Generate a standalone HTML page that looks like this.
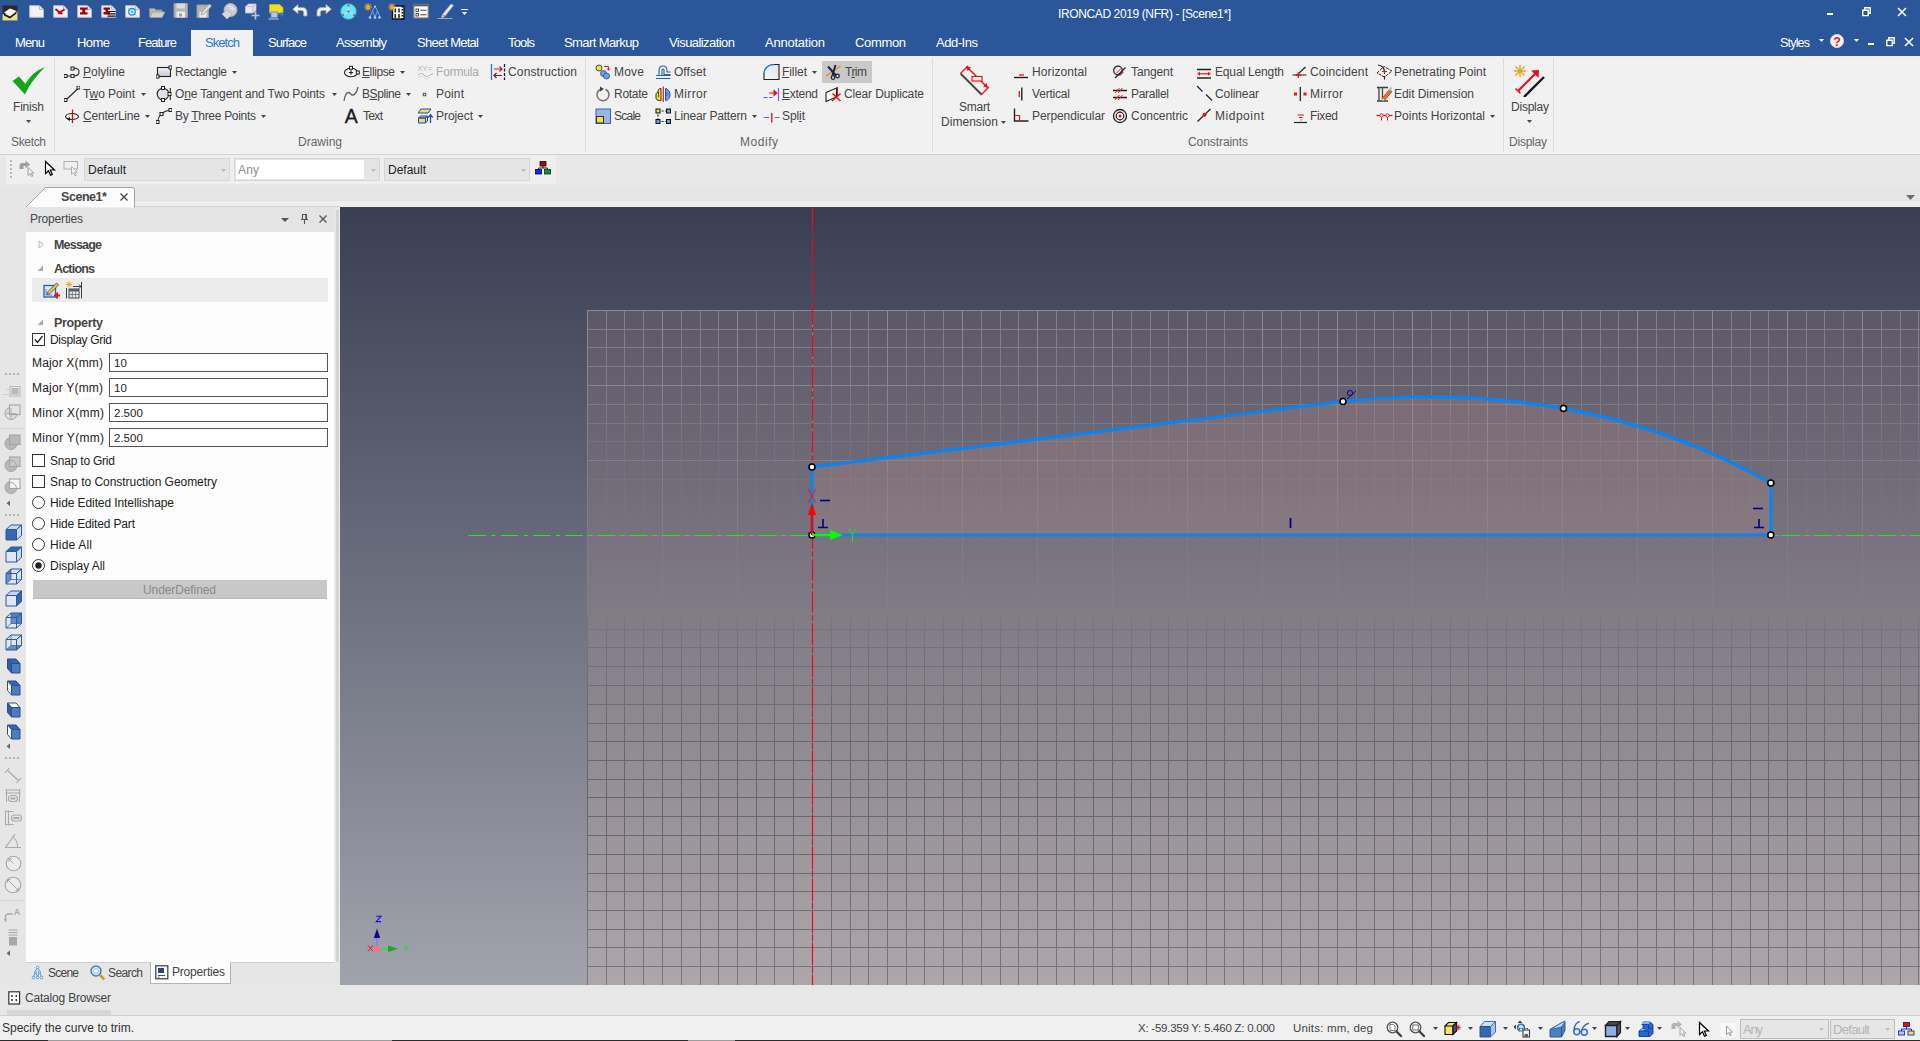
<!DOCTYPE html>
<html><head><meta charset="utf-8"><title>IRONCAD 2019 (NFR) - [Scene1*]</title><style>
html,body{margin:0;padding:0;}
body{width:1920px;height:1041px;overflow:hidden;position:relative;background:#f0f0f0;font-family:"Liberation Sans", sans-serif;}
.a{position:absolute;display:block;}
.t{position:absolute;white-space:pre;font-family:"Liberation Sans", sans-serif;}
</style></head>
<body>
<div class="a" style="left:0px;top:0px;width:1920px;height:56px;background:#2b579a;"></div>
<div class="a" style="left:0px;top:56px;width:1920px;height:98px;background:#f1f1f1;"></div>
<div class="a" style="left:0px;top:154px;width:1920px;height:1px;background:#d2d2d2;"></div>
<div class="a" style="left:0px;top:155px;width:1920px;height:52px;background:#e8e8e8;"></div>
<div class="a" style="left:191px;top:30px;width:62px;height:26px;background:#f1f1f1;"></div>
<div class="a" style="left:6px;top:155px;width:550px;height:29px;background:#efefef;"></div>
<div class="a" style="left:0px;top:186px;width:1920px;height:21px;background:#e6e6e6;"></div>
<div class="a" style="left:135px;top:200px;width:1785px;height:1px;background:#e6e0e0;"></div>
<div class="a" style="left:135px;top:201px;width:1785px;height:6px;background:#eeeeea;"></div>
<div class="a" style="left:135px;top:206px;width:205px;height:1px;background:#d4d4d4;"></div>
<div class="a" style="left:0px;top:207px;width:26px;height:808px;background:#e6e6e6;"></div>
<div class="a" style="left:26px;top:207px;width:309px;height:25px;background:#e4e4e4;"></div>
<div class="a" style="left:26px;top:232px;width:308px;height:730px;background:#fdfdfd;"></div>
<div class="a" style="left:334px;top:207px;width:6px;height:778px;background:#e8e8e8;"></div>
<div class="a" style="left:336px;top:210px;width:3px;height:752px;background:#d4d4d1;"></div>
<div class="a" style="left:339px;top:207px;width:1px;height:778px;background:#eeeeee;"></div>
<div class="a" style="left:26px;top:962px;width:314px;height:23px;background:#e6e6e6;"></div>
<div class="a" style="left:0px;top:985px;width:1920px;height:30px;background:#e8e8e8;"></div>
<div class="a" style="left:0px;top:1016px;width:1920px;height:25px;background:#f0f0f0;"></div>
<div class="a" style="left:0px;top:1015px;width:1920px;height:1px;background:#cfcfcf;"></div>
<svg class="a" style="left:340px;top:207px;" width="1580" height="778" viewBox="0 0 1580 778"><defs>
<linearGradient id="bg" x1="0" y1="0" x2="0" y2="1">
<stop offset="0" stop-color="#3a3e53"/><stop offset="1" stop-color="#a1a3ac"/></linearGradient>
<linearGradient id="pl" x1="0" y1="0" x2="0" y2="1"><stop offset="0" stop-color="#5d5868"/><stop offset="1" stop-color="#ada6ab"/></linearGradient>
<linearGradient id="gminor" gradientUnits="userSpaceOnUse" x1="0" y1="103" x2="0" y2="778"><stop offset="0.0000" stop-color="#838088"/><stop offset="0.0222" stop-color="#828087"/><stop offset="0.0444" stop-color="#827f87"/><stop offset="0.0667" stop-color="#817f86"/><stop offset="0.0741" stop-color="#817f86"/><stop offset="0.0889" stop-color="#807e85"/><stop offset="0.1111" stop-color="#7f7d84"/><stop offset="0.1333" stop-color="#7e7b82"/><stop offset="0.1556" stop-color="#7b7880"/><stop offset="0.1778" stop-color="#78767d"/><stop offset="0.1926" stop-color="#76747b"/><stop offset="0.2000" stop-color="#76747a"/><stop offset="0.2222" stop-color="#76737a"/><stop offset="0.2444" stop-color="#757279"/><stop offset="0.2519" stop-color="#757279"/><stop offset="0.2667" stop-color="#767379"/><stop offset="0.2889" stop-color="#76747a"/><stop offset="0.3111" stop-color="#77757b"/><stop offset="0.3333" stop-color="#78757c"/><stop offset="0.3556" stop-color="#767581"/><stop offset="0.3778" stop-color="#787783"/><stop offset="0.4000" stop-color="#7a7885"/><stop offset="0.4222" stop-color="#7b7a86"/><stop offset="0.4444" stop-color="#7d7c88"/><stop offset="0.4474" stop-color="#7d7c88"/><stop offset="0.4548" stop-color="#767580"/><stop offset="0.4667" stop-color="#75747f"/><stop offset="0.4889" stop-color="#74727e"/><stop offset="0.5037" stop-color="#73717d"/><stop offset="0.5111" stop-color="#72717c"/><stop offset="0.5333" stop-color="#706f7a"/><stop offset="0.5556" stop-color="#6e6d78"/><stop offset="0.5778" stop-color="#6c6b76"/><stop offset="0.6000" stop-color="#6b6a74"/><stop offset="0.6222" stop-color="#6a6973"/><stop offset="0.6444" stop-color="#696772"/><stop offset="0.6667" stop-color="#676670"/><stop offset="0.6889" stop-color="#67656f"/><stop offset="0.7111" stop-color="#66656f"/><stop offset="0.7259" stop-color="#66656e"/><stop offset="0.7333" stop-color="#67656f"/><stop offset="0.7556" stop-color="#686670"/><stop offset="0.7778" stop-color="#696871"/><stop offset="0.8000" stop-color="#6a6972"/><stop offset="0.8222" stop-color="#6c6a73"/><stop offset="0.8444" stop-color="#6d6b74"/><stop offset="0.8667" stop-color="#6e6d75"/><stop offset="0.8741" stop-color="#6f6d75"/><stop offset="0.8889" stop-color="#706e76"/><stop offset="0.9111" stop-color="#716f77"/><stop offset="0.9333" stop-color="#727179"/><stop offset="0.9556" stop-color="#74727a"/><stop offset="0.9778" stop-color="#75737b"/><stop offset="1.0000" stop-color="#77757c"/></linearGradient>
<linearGradient id="gmajor" gradientUnits="userSpaceOnUse" x1="0" y1="103" x2="0" y2="778"><stop offset="0.0000" stop-color="#8d8a92"/><stop offset="0.0222" stop-color="#8c8a91"/><stop offset="0.0444" stop-color="#8c8991"/><stop offset="0.0667" stop-color="#8b8990"/><stop offset="0.0741" stop-color="#8b8990"/><stop offset="0.0889" stop-color="#8a888f"/><stop offset="0.1111" stop-color="#89878e"/><stop offset="0.1333" stop-color="#88858c"/><stop offset="0.1556" stop-color="#86848b"/><stop offset="0.1778" stop-color="#858289"/><stop offset="0.1926" stop-color="#838188"/><stop offset="0.2000" stop-color="#838087"/><stop offset="0.2222" stop-color="#827f86"/><stop offset="0.2444" stop-color="#807e84"/><stop offset="0.2519" stop-color="#807d84"/><stop offset="0.2667" stop-color="#807d84"/><stop offset="0.2889" stop-color="#807d84"/><stop offset="0.3111" stop-color="#807d84"/><stop offset="0.3333" stop-color="#807d83"/><stop offset="0.3556" stop-color="#807d83"/><stop offset="0.3778" stop-color="#807d83"/><stop offset="0.4000" stop-color="#817e83"/><stop offset="0.4222" stop-color="#817e84"/><stop offset="0.4444" stop-color="#817e84"/><stop offset="0.4474" stop-color="#817e84"/><stop offset="0.4548" stop-color="#767580"/><stop offset="0.4667" stop-color="#75747f"/><stop offset="0.4889" stop-color="#74727e"/><stop offset="0.5037" stop-color="#73717d"/><stop offset="0.5111" stop-color="#72717c"/><stop offset="0.5333" stop-color="#706f7a"/><stop offset="0.5556" stop-color="#6e6d78"/><stop offset="0.5778" stop-color="#6c6b76"/><stop offset="0.6000" stop-color="#6b6a74"/><stop offset="0.6222" stop-color="#6a6973"/><stop offset="0.6444" stop-color="#696772"/><stop offset="0.6667" stop-color="#676670"/><stop offset="0.6889" stop-color="#67656f"/><stop offset="0.7111" stop-color="#66656f"/><stop offset="0.7259" stop-color="#66656e"/><stop offset="0.7333" stop-color="#67656f"/><stop offset="0.7556" stop-color="#686670"/><stop offset="0.7778" stop-color="#696871"/><stop offset="0.8000" stop-color="#6a6972"/><stop offset="0.8222" stop-color="#6c6a73"/><stop offset="0.8444" stop-color="#6d6b74"/><stop offset="0.8667" stop-color="#6e6d75"/><stop offset="0.8741" stop-color="#6f6d75"/><stop offset="0.8889" stop-color="#706e76"/><stop offset="0.9111" stop-color="#716f77"/><stop offset="0.9333" stop-color="#727179"/><stop offset="0.9556" stop-color="#74727a"/><stop offset="0.9778" stop-color="#75737b"/><stop offset="1.0000" stop-color="#77757c"/></linearGradient>
</defs><rect x="0" y="0" width="1580" height="778" fill="url(#bg)"/><rect x="247" y="103" width="1333" height="675" fill="url(#pl)"/><path d="M266.5 103V778M284.5 103V778M303.5 103V778M341.5 103V778M360.5 103V778M378.5 103V778M416.5 103V778M434.5 103V778M453.5 103V778M491.5 103V778M510.5 103V778M528.5 103V778M566.5 103V778M584.5 103V778M603.5 103V778M641.5 103V778M660.5 103V778M678.5 103V778M716.5 103V778M734.5 103V778M753.5 103V778M791.5 103V778M810.5 103V778M828.5 103V778M866.5 103V778M884.5 103V778M903.5 103V778M941.5 103V778M960.5 103V778M978.5 103V778M1016.5 103V778M1034.5 103V778M1053.5 103V778M1091.5 103V778M1110.5 103V778M1128.5 103V778M1166.5 103V778M1184.5 103V778M1203.5 103V778M1241.5 103V778M1260.5 103V778M1278.5 103V778M1316.5 103V778M1334.5 103V778M1353.5 103V778M1391.5 103V778M1410.5 103V778M1428.5 103V778M1466.5 103V778M1484.5 103V778M1503.5 103V778M1541.5 103V778M1560.5 103V778M1578.5 103V778M247 122.5H1580M247 140.5H1580M247 159.5H1580M247 197.5H1580M247 216.5H1580M247 234.5H1580M247 272.5H1580M247 290.5H1580M247 309.5H1580M247 347.5H1580M247 366.5H1580M247 384.5H1580M247 422.5H1580M247 440.5H1580M247 459.5H1580M247 497.5H1580M247 516.5H1580M247 534.5H1580M247 572.5H1580M247 590.5H1580M247 609.5H1580M247 647.5H1580M247 666.5H1580M247 684.5H1580M247 722.5H1580M247 740.5H1580M247 759.5H1580" stroke="url(#gminor)" stroke-width="1" fill="none"/><path d="M247.5 103V778M322.5 103V778M397.5 103V778M472.5 103V778M547.5 103V778M622.5 103V778M697.5 103V778M772.5 103V778M847.5 103V778M922.5 103V778M997.5 103V778M1072.5 103V778M1147.5 103V778M1222.5 103V778M1297.5 103V778M1372.5 103V778M1447.5 103V778M1522.5 103V778M247 103.5H1580M247 178.5H1580M247 253.5H1580M247 328.5H1580M247 403.5H1580M247 478.5H1580M247 553.5H1580M247 628.5H1580M247 703.5H1580M247 778.5H1580" stroke="url(#gmajor)" stroke-width="1" fill="none"/><path d="M472 260L1003 194.5A795 795 0 0 1 1223.5 201.39999999999998A655 655 0 0 1 1430.8 276L1430.8 328L472 328Z" fill="#dca096" fill-opacity="0.16" stroke="none"/><path d="M472.5 0V778" stroke="#f40808" stroke-width="1.150" stroke-dasharray="21.500 2.500 5.500 2.500" fill="none"/><path d="M128.5 328.5H472" stroke="#14f414" stroke-width="1.200" stroke-dasharray="17.500 5.500 4 5.250" fill="none"/><path d="M1434.5 328.5h4M1442 328.5H1580" stroke="#14f414" stroke-width="1.200" stroke-dasharray="17.500 5.500 4 5" fill="none"/><path d="M472 260L1003 194.5A795 795 0 0 1 1223.5 201.39999999999998A655 655 0 0 1 1430.8 276L1430.8 328L472 328Z" fill="none" stroke="#0a84f2" stroke-width="3.100" stroke-linejoin="round"/><circle cx="472" cy="260" r="3" fill="#ffffff" stroke="#000000" stroke-width="1.6"/><circle cx="1003" cy="194.5" r="3" fill="#ffffff" stroke="#000000" stroke-width="1.6"/><circle cx="1223.5" cy="201.39999999999998" r="3" fill="#ffffff" stroke="#000000" stroke-width="1.6"/><circle cx="1430.8" cy="276" r="3" fill="#ffffff" stroke="#000000" stroke-width="1.6"/><circle cx="1430.8" cy="328" r="3" fill="#ffffff" stroke="#000000" stroke-width="1.6"/><circle cx="472" cy="328" r="3" fill="#ffffff" stroke="#000000" stroke-width="1.6"/><path d="M472 328V306" stroke="#ff0000" stroke-width="2.4"/><path d="M468 308L472 296L476 308Z" fill="#ff0000"/><path d="M468 282L476 296M476 282L468 296" stroke="#ff1010" stroke-width="1" fill="none"/><path d="M472 328H492" stroke="#00ff00" stroke-width="2.6"/><path d="M490 323L503 328L490 333Z" fill="#00ff00"/><path d="M509 322L512.5 327L516 322M512.5 327V335" stroke="#10f010" stroke-width="1" fill="none"/><path d="M480 293.5H490" stroke="#000088" stroke-width="1.6"/><path d="M478 320.5H488M483 321V312" stroke="#000088" stroke-width="1.6" fill="none"/><path d="M950.5 311V321" stroke="#000088" stroke-width="1.8"/><path d="M1413 301.5H1423" stroke="#000088" stroke-width="1.6"/><path d="M1414 320.5H1424M1419 320V312" stroke="#000088" stroke-width="1.6" fill="none"/><circle cx="1010" cy="186" r="2.6" fill="none" stroke="#000088" stroke-width="0.9"/><path d="M1007 192L1016 184" stroke="#000088" stroke-width="0.9"/><path d="M37 741.5V730.5" stroke="#8484ff" stroke-width="2"/><path d="M33.8 731.0L37 721.5L40.2 731.0Z" fill="#0c0c88"/><path d="M37 741.8H49" stroke="#30e040" stroke-width="1.600"/><path d="M48 738.5L58 741.8L48 745.1Z" fill="#18a828"/><circle cx="37" cy="741.8" r="3" fill="#ff7070"/><path d="M28 738.3l5 6m0 -6l-5 6" stroke="#ff1010" stroke-width="1" fill="none"/><path d="M64 738.0l2.200 3l2.200 -3m-2.200 3v3.500" stroke="#20e020" stroke-width="1" fill="none"/><path d="M36.2 709.2h4.800l-4.800 5.400h4.800" stroke="#1010f0" stroke-width="1.100" fill="none"/></svg>
<div class="a" style="left:1827px;top:13px;width:6px;height:2px;background:#fff;"></div>
<svg class="a" style="left:1862px;top:7px;" width="10" height="10" viewBox="0 0 10 10"><path d="M0.800 3.200h5.400v5.400h-5.400zM2.800 3V0.800h5.400v5.400H6.500" fill="none" stroke="#fff" stroke-width="1.400"/></svg>
<svg class="a" style="left:1897px;top:7px;" width="10" height="10" viewBox="0 0 10 10"><path d="M1 1l8 8M9 1l-8 8" stroke="#fff" stroke-width="1.6"/></svg>
<div class="a" style="left:1868px;top:43px;width:6px;height:2px;background:#fff;"></div>
<svg class="a" style="left:1886px;top:37px;" width="10" height="10" viewBox="0 0 10 10"><path d="M0.800 3.200h5.400v5.400h-5.400zM2.800 3V0.800h5.400v5.400H6.500" fill="none" stroke="#fff" stroke-width="1.400"/></svg>
<svg class="a" style="left:1904px;top:37px;" width="10" height="10" viewBox="0 0 10 10"><path d="M1 1l8 8M9 1l-8 8" stroke="#fff" stroke-width="1.6"/></svg>
<svg class="a" style="left:1817.5px;top:37.5px" width="7" height="5"><path d="M1 1h5l-2.5 3z" fill="#fff"/></svg>
<svg class="a" style="left:1852.5px;top:37.5px" width="7" height="5"><path d="M1 1h5l-2.5 3z" fill="#fff"/></svg>
<svg class="a" style="left:1829px;top:33px;" width="16" height="16" viewBox="0 0 16 16"><circle cx="8" cy="8" r="6.6" fill="#f4f4f4" stroke="#c8c8d8" stroke-width="1"/><text x="8" y="12.6" font-family="Liberation Sans" font-weight="bold" font-size="12.5" text-anchor="middle" fill="#e02020">?</text></svg>
<svg class="a" style="left:2px;top:4.5px;" width="16" height="17" viewBox="0 0 16 17"><rect x="0.500" y="0.500" width="15" height="15" fill="#2a2a28"/><path d="M0.500 9.500l15 -3v9h-15z" fill="#e8e090"/><path d="M2 7.500l6 -4l6.500 2.500l-6.500 5z" fill="#f4f4f4"/><path d="M2 8.500l6 3l6.500 -5v2l-6.500 5l-6 -3z" fill="#181818"/></svg>
<svg class="a" style="left:29px;top:5px;" width="16" height="13" viewBox="0 0 16 13"><path d="M0.700 0.700h9.800l4 3.800v7.800h-13.800z" fill="#f2f2f6" stroke="#b8bccc" stroke-width="1"/><path d="M10.500 0.700v3.800h4" fill="#dfe3ee" stroke="#a8acb8" stroke-width="0.800"/></svg>
<svg class="a" style="left:53px;top:5px;" width="16" height="13" viewBox="0 0 16 13"><path d="M0.700 0.700h9.800l4 3.800v7.800h-13.800z" fill="#f2f2f6" stroke="#b8bccc" stroke-width="1"/><path d="M10.500 0.700v3.800h4" fill="#dfe3ee" stroke="#a8acb8" stroke-width="0.800"/><path d="M2.500 4l4 3.500l5 -3M5.500 9l1 -1.500l3 1.500" stroke="#c00000" stroke-width="1.800" fill="none"/></svg>
<svg class="a" style="left:77px;top:5px;" width="16" height="13" viewBox="0 0 16 13"><path d="M0.700 0.700h9.800l4 3.800v7.800h-13.800z" fill="#f2f2f6" stroke="#b8bccc" stroke-width="1"/><path d="M10.500 0.700v3.800h4" fill="#dfe3ee" stroke="#a8acb8" stroke-width="0.800"/><path d="M3 2.500h7.500v2.300h-2.300v2.400h2.300v2.300h-7.500v-2.300h2.300v-2.400h-2.300z" fill="#a00000"/></svg>
<svg class="a" style="left:101px;top:5px;" width="16" height="13" viewBox="0 0 16 13"><path d="M0.700 0.700h9.800l4 3.800v7.800h-13.800z" fill="#f2f2f6" stroke="#b8bccc" stroke-width="1"/><path d="M10.500 0.700v3.800h4" fill="#dfe3ee" stroke="#a8acb8" stroke-width="0.800"/><path d="M2.500 2.500h6.500v2.200h-2v2.400h2v2.400h-6.500v-2.400h2v-2.400h-2z" fill="#a00000"/><path d="M6.500 6.500h8M6.500 8.800h8M6.500 11.100h8" stroke="#111" stroke-width="1.200"/></svg>
<svg class="a" style="left:125px;top:5px;" width="16" height="13" viewBox="0 0 16 13"><path d="M0.700 0.700h9.800l4 3.800v7.800h-13.800z" fill="#f2f2f6" stroke="#b8bccc" stroke-width="1"/><path d="M10.500 0.700v3.800h4" fill="#dfe3ee" stroke="#a8acb8" stroke-width="0.800"/><circle cx="7" cy="6.800" r="3.300" fill="none" stroke="#2090d0" stroke-width="1.300"/><circle cx="7" cy="6.800" r="1.300" fill="#40c0e0"/><path d="M3 3l8.500 7.500" stroke="#60b0e0" stroke-width="0.700"/></svg>
<svg class="a" style="left:149px;top:3px;" width="16" height="17" viewBox="0 0 16 17"><path d="M0.500 5.500h5l1.500 1.500h6v7h-12.500z" fill="#b8b8b0" stroke="#909088" stroke-width="0.800"/><path d="M3.500 9h12.500l-3 5.500h-12z" fill="#d0d0c8" stroke="#a0a098" stroke-width="0.800"/></svg>
<svg class="a" style="left:173px;top:3px;" width="16" height="17" viewBox="0 0 16 17"><path d="M1 0.500h13.500v14h-13.500z" fill="#b4b4b4" stroke="#989898"/><rect x="3.500" y="0.500" width="8.500" height="5" fill="#dcdcdc"/><rect x="3.500" y="8.500" width="8.500" height="6" fill="#ececec"/><rect x="6" y="10.500" width="3" height="3" fill="#a0a0a0"/></svg>
<svg class="a" style="left:196px;top:3px;" width="16" height="17" viewBox="0 0 16 17"><path d="M1 2h11.500v12.500h-11.500z" fill="#b4b4b4" stroke="#989898"/><rect x="3.500" y="9" width="7" height="5.500" fill="#ececec"/><path d="M6 9l7.500 -8l2 2l-7.500 8l-3 1z" fill="#dcdcdc" stroke="#a0a0a0" stroke-width="0.800"/></svg>
<svg class="a" style="left:221px;top:3px;" width="17" height="17" viewBox="0 0 17 17"><circle cx="9.500" cy="7" r="6.500" fill="#cccccc" stroke="#b0b0b0"/><path d="M1 11l5 -4l5 4.500l-5 4.500z" fill="#d8d8d8" stroke="#b4b4b4" stroke-width="0.800"/><path d="M7 3.500a4.500 4.500 0 0 1 6 3.500M9 5a3 3 0 0 1 3 2.500" stroke="#f0f0f0" fill="none"/></svg>
<svg class="a" style="left:244px;top:3px;" width="16" height="17" viewBox="0 0 16 17"><path d="M1.500 3.500l3 -2.500h7.500l-3 2.500zM1.500 3.500h7.500v6.500h-7.500zM9 3.500l3 -2.500v6.500l-3 2.500z" fill="#e8e8f0" stroke="#c0c0cc" stroke-width="0.800"/><path d="M11.500 8.500v8M7.500 12.500h8" stroke="#c4c4c4" stroke-width="1.700"/></svg>
<svg class="a" style="left:268px;top:3px;" width="16" height="17" viewBox="0 0 16 17"><path d="M1.500 1.500h10l3.500 3v5.500h-13.500z" fill="#f4dc20" stroke="#c8b420" stroke-width="0.800"/><rect x="3" y="9" width="6.500" height="5.500" fill="#b4c4e4" stroke="#6888c8" stroke-width="0.800"/><path d="M0.500 16h10" stroke="#c8d0e8"/><path d="M10.500 11.500h4.500l-1.800 -2M15 11.500l-1.800 2" stroke="#3878d8" stroke-width="1.200" fill="none"/></svg>
<svg class="a" style="left:292px;top:2.5px;" width="16" height="17" viewBox="0 0 16 17"><path d="M0.700 6.200l5.300 -4.700v3h4c3.500 0 5 2 5 5v3.500h-3.300v-3c0 -1.500 -0.500 -2.500 -2.200 -2.500h-3.500v3.200z" fill="#f6f6f6" stroke="#a0a0a0" stroke-width="0.900"/></svg>
<svg class="a" style="left:316px;top:2.5px;" width="16" height="17" viewBox="0 0 16 17"><path d="M15.300 6.200l-5.300 -4.700v3h-4c-3.500 0 -5 2 -5 5v3.500h3.300v-3c0 -1.500 0.500 -2.500 2.200 -2.500h3.500v3.200z" fill="#f0f0f0" stroke="#a8a8a8" stroke-width="0.900"/></svg>
<svg class="a" style="left:340px;top:3px;" width="17" height="17" viewBox="0 0 17 17"><circle cx="8.500" cy="8.500" r="7.800" fill="#60e8f4" stroke="#38a8d0" stroke-width="0.800"/><path d="M8.500 1v7.500l-6.500 4M8.500 8.500l6.500 4" stroke="#a8f6fc" stroke-width="1" fill="none"/><circle cx="8.500" cy="2.500" r="1" fill="#e02040"/><circle cx="8.500" cy="8.500" r="1.100" fill="#e02040"/><circle cx="3" cy="12" r="1" fill="#e02040"/><circle cx="14" cy="12" r="1" fill="#e02040"/></svg>
<svg class="a" style="left:364px;top:3px;" width="17" height="17" viewBox="0 0 17 17"><path d="M4 0.200v7.600M0.200 4h7.600M1.300 1.300l5.400 5.400M6.700 1.300l-5.400 5.400" stroke="#f4b020" stroke-width="1.100"/><path d="M11 3l-2.500 5l-2.500 6M11 3l2.500 5l2.500 6M8.500 8l2.500 6M13.500 8l-2.500 6" stroke="#78b0e8" stroke-width="0.900" fill="none"/><circle cx="11" cy="3.500" r="1" fill="#a8d0f4"/><circle cx="6" cy="14.500" r="1.300" fill="#a8d0f4"/><circle cx="11" cy="14.500" r="1.300" fill="#a8d0f4"/><circle cx="15.500" cy="14.500" r="1.300" fill="#a8d0f4"/></svg>
<svg class="a" style="left:388px;top:3px;" width="17" height="17" viewBox="0 0 17 17"><rect x="4.500" y="3" width="11.500" height="13" fill="#f4f4f4" stroke="#101010" stroke-width="1.400"/><path d="M7.300 5.500v4M7.300 11v4M11 5.500v4M11 11v4" stroke="#202020" stroke-width="1.500"/><path d="M14.300 3v13" stroke="#101010" stroke-width="1.500" stroke-dasharray="1.500 1.500"/><path d="M4 0.200v7.600M0.200 4h7.600M1.300 1.300l5.400 5.400M6.700 1.300l-5.400 5.400" stroke="#f4b020" stroke-width="1.100"/></svg>
<svg class="a" style="left:413px;top:3px;" width="16" height="17" viewBox="0 0 16 17"><rect x="0.800" y="1.500" width="14.500" height="13.500" fill="#f8f8f8" stroke="#787878" stroke-width="1.200"/><path d="M0.800 2.500h14.500" stroke="#585858" stroke-width="1.600"/><rect x="3" y="6" width="2.500" height="2.500" fill="none" stroke="#404040" stroke-width="0.900"/><rect x="3" y="10.500" width="2.500" height="2.500" fill="none" stroke="#404040" stroke-width="0.900"/><path d="M7.500 7.300h6M7.500 11.800h6" stroke="#404040" stroke-width="1.100"/></svg>
<svg class="a" style="left:437px;top:3px;" width="18" height="17" viewBox="0 0 18 17"><path d="M14 1l2.500 1.500l-8.500 10.500l-3.500 2l1 -3.500z" fill="#e8e8e8" stroke="#b0b0b0" stroke-width="0.800"/><path d="M5.500 11.500l2.500 1.500" stroke="#909090"/><path d="M0.500 15.500h15" stroke="#b0a890" stroke-width="1"/></svg>
<div class="a" style="left:461px;top:9px;width:7px;height:1px;background:#fff;"></div>
<svg class="a" style="left:461.0px;top:11.0px" width="7" height="5"><path d="M1 1h5l-2.5 3z" fill="#fff"/></svg>
<div class="a" style="left:54px;top:58px;width:1px;height:94px;background:#dcdcdc;"></div>
<div class="a" style="left:585px;top:58px;width:1px;height:94px;background:#dcdcdc;"></div>
<div class="a" style="left:932px;top:58px;width:1px;height:94px;background:#dcdcdc;"></div>
<div class="a" style="left:1503px;top:58px;width:1px;height:94px;background:#dcdcdc;"></div>
<div class="a" style="left:1553px;top:58px;width:1px;height:94px;background:#dcdcdc;"></div>
<svg class="a" style="left:11px;top:65px;" width="36" height="31" viewBox="0 0 36 31"><path d="M1.500 16l6.500 -4.500l6.500 7.500C19 11 25 5.500 34 2C27 9 19 18.500 14 29.500z" fill="#18a418"/></svg>
<svg class="a" style="left:24.5px;top:118.5px" width="7" height="5"><path d="M1 1h5l-2.5 3z" fill="#444"/></svg>
<div class="a" style="left:822px;top:61px;width:50px;height:22px;background:#c9c9c9;"></div>
<svg class="a" style="left:139.5px;top:92.0px" width="7" height="5"><path d="M1 1h5l-2.5 3z" fill="#444"/></svg>
<svg class="a" style="left:143.5px;top:114.0px" width="7" height="5"><path d="M1 1h5l-2.5 3z" fill="#444"/></svg>
<svg class="a" style="left:230.5px;top:70.0px" width="7" height="5"><path d="M1 1h5l-2.5 3z" fill="#444"/></svg>
<svg class="a" style="left:330.5px;top:92.0px" width="7" height="5"><path d="M1 1h5l-2.5 3z" fill="#444"/></svg>
<svg class="a" style="left:259.5px;top:114.0px" width="7" height="5"><path d="M1 1h5l-2.5 3z" fill="#444"/></svg>
<svg class="a" style="left:398.5px;top:70.0px" width="7" height="5"><path d="M1 1h5l-2.5 3z" fill="#444"/></svg>
<svg class="a" style="left:404.5px;top:92.0px" width="7" height="5"><path d="M1 1h5l-2.5 3z" fill="#444"/></svg>
<svg class="a" style="left:476.5px;top:114.0px" width="7" height="5"><path d="M1 1h5l-2.5 3z" fill="#444"/></svg>
<svg class="a" style="left:750.5px;top:114.0px" width="7" height="5"><path d="M1 1h5l-2.5 3z" fill="#444"/></svg>
<svg class="a" style="left:810.5px;top:70.0px" width="7" height="5"><path d="M1 1h5l-2.5 3z" fill="#444"/></svg>
<svg class="a" style="left:1488.5px;top:114.0px" width="7" height="5"><path d="M1 1h5l-2.5 3z" fill="#444"/></svg>
<svg class="a" style="left:999.5px;top:119.5px" width="7" height="5"><path d="M1 1h5l-2.5 3z" fill="#444"/></svg>
<svg class="a" style="left:1526.0px;top:118.5px" width="7" height="5"><path d="M1 1h5l-2.5 3z" fill="#444"/></svg>
<svg class="a" style="left:64px;top:64px;" width="16" height="16" viewBox="0 0 16 16"><path d="M1.500 12h8c4 0 5.500 -2 5.500 -4.300c0 -2.500 -2 -3.700 -5.500 -3.700" fill="none" stroke="#222222" stroke-width="1.100"/><rect x="0.0" y="10.5" width="3" height="3" fill="#f4f4f4" stroke="#222" stroke-width="1"/><rect x="7.0" y="10.5" width="3" height="3" fill="#f4f4f4" stroke="#222" stroke-width="1"/><rect x="7.0" y="3.0" width="3" height="3" fill="#f4f4f4" stroke="#222" stroke-width="1"/></svg>
<svg class="a" style="left:64px;top:86px;" width="16" height="16" viewBox="0 0 16 16"><path d="M2 14L14.500 2" stroke="#222222" stroke-width="1.100"/><rect x="0.0" y="12.5" width="3" height="3" fill="#f4f4f4" stroke="#222" stroke-width="1"/><rect x="13.0" y="0.0" width="3" height="3" fill="#f4f4f4" stroke="#222" stroke-width="1"/></svg>
<svg class="a" style="left:64px;top:108px;" width="16" height="16" viewBox="0 0 16 16"><ellipse cx="8" cy="8.500" rx="6.500" ry="3" fill="none" stroke="#222222" stroke-width="1.100"/><path d="M2.500 11l3.500 -2v4z" fill="#222222"/><path d="M8.500 1.500v13.500" stroke="#d01010" stroke-width="1.300"/></svg>
<svg class="a" style="left:156px;top:64px;" width="16" height="16" viewBox="0 0 16 16"><defs><linearGradient id="rg" x1="0" y1="0" x2="0" y2="1"><stop offset="0" stop-color="#f4f4f6"/><stop offset="1" stop-color="#c4c8d0"/></linearGradient></defs><rect x="1.500" y="3.500" width="13" height="9" fill="url(#rg)" stroke="#222222" stroke-width="1.100"/><rect x="0.0" y="11.0" width="3" height="3" fill="#f4f4f4" stroke="#222" stroke-width="1"/><rect x="13.0" y="2.0" width="3" height="3" fill="#f4f4f4" stroke="#222" stroke-width="1"/></svg>
<svg class="a" style="left:156px;top:86px;" width="16" height="16" viewBox="0 0 16 16"><circle cx="7" cy="8" r="5.800" fill="#e0e0e4" stroke="#222222" stroke-width="1.100"/><path d="M14.300 2v12" stroke="#222222" stroke-width="1.100"/><rect x="5.5" y="0.5" width="3" height="3" fill="#f4f4f4" stroke="#222" stroke-width="1"/><rect x="5.5" y="12.5" width="3" height="3" fill="#f4f4f4" stroke="#222" stroke-width="1"/><rect x="12.0" y="6.5" width="3" height="3" fill="#f4f4f4" stroke="#222" stroke-width="1"/></svg>
<svg class="a" style="left:156px;top:108px;" width="16" height="16" viewBox="0 0 16 16"><path d="M1.500 14c1 -7 5 -11 13 -12" fill="none" stroke="#222222" stroke-width="1.100"/><rect x="0.0" y="12.5" width="3" height="3" fill="#f4f4f4" stroke="#222" stroke-width="1"/><rect x="4.0" y="4.5" width="3" height="3" fill="#f4f4f4" stroke="#222" stroke-width="1"/><rect x="13.0" y="0.5" width="3" height="3" fill="#f4f4f4" stroke="#222" stroke-width="1"/></svg>
<svg class="a" style="left:343px;top:64px;" width="17" height="16" viewBox="0 0 17 16"><ellipse cx="8" cy="8.500" rx="6.500" ry="4.300" fill="#f6f6f6" stroke="#222222" stroke-width="1.100"/><path d="M8 6.300v4.400M5.800 8.500h4.400" stroke="#222222" stroke-width="1.100"/><rect x="6.5" y="2.3" width="3" height="3" fill="#f4f4f4" stroke="#222" stroke-width="1"/><rect x="13.3" y="7.0" width="3" height="3" fill="#f4f4f4" stroke="#222" stroke-width="1"/></svg>
<svg class="a" style="left:343px;top:86px;" width="17" height="16" viewBox="0 0 17 16"><path d="M1 15c1 -6 2.500 -8.500 4.500 -8.500c2 0 2 3 4.500 2.500c2.500 -0.500 4 -3.500 5 -8" fill="none" stroke="#606060" stroke-width="1.300"/></svg>
<svg class="a" style="left:343px;top:107px;" width="17" height="18" viewBox="0 0 17 18"><text x="8.200" y="16" font-family="Liberation Sans" font-size="19.500" text-anchor="middle" fill="#1c1c1c" stroke="#1c1c1c" stroke-width="0.350">A</text></svg>
<svg class="a" style="left:417px;top:64px;" width="17" height="16" viewBox="0 0 17 16"><text x="0.500" y="6.500" font-family="Liberation Sans" font-size="7.500" fill="#b4b4b4">XY=</text><path d="M1 11c2 -2 4 -2 6 0s4 2 6 0l3 -1.500" fill="none" stroke="#b4b4b4" stroke-width="1"/><path d="M1 13.500c2 -2 4 -2 6 0s4 2 6 0" fill="none" stroke="#d0d0d0" stroke-width="0.800"/></svg>
<svg class="a" style="left:422px;top:92px;" width="5" height="5" viewBox="0 0 5 5"><rect x="1.250" y="1.250" width="2.500" height="2.500" fill="#f4f4f4" stroke="#444" stroke-width="0.900"/></svg>
<svg class="a" style="left:417px;top:108px;" width="17" height="16" viewBox="0 0 17 16"><path d="M1 5l3 -4h10l-3 4z" fill="#f4e040" stroke="#1848d0" stroke-width="1"/><path d="M1.500 10l2 -2h7l-2 2zM1.500 10h7v5h-7zM8.500 10l2 -2v5l-2 2z" fill="#f4e040" stroke="#1848d0" stroke-width="1"/><path d="M13.500 15v-8M11.300 9.500l2.200 -2.700l2.200 2.700" fill="none" stroke="#1848d0" stroke-width="1.200"/></svg>
<svg class="a" style="left:490px;top:64px;" width="16" height="16" viewBox="0 0 16 16"><path d="M1.500 0v16" stroke="#2878e0" stroke-width="1.300"/><path d="M14.500 0v16" stroke="#101070" stroke-width="1.300" stroke-dasharray="3 1.500"/><path d="M4 5h8M9.500 2.500l2.500 2.500l-2.500 2.500" fill="none" stroke="#d01818" stroke-width="1.200"/><path d="M12 11.500h-8M6.500 9l-2.500 2.500l2.500 2.500" fill="none" stroke="#901010" stroke-width="1.200"/></svg>
<svg class="a" style="left:595px;top:64px;" width="16" height="16" viewBox="0 0 16 16"><circle cx="4" cy="4" r="3" fill="#f4e030" stroke="#404040" stroke-width="0.900"/><circle cx="8.500" cy="9.500" r="3" fill="#70a0e0" stroke="#2850b0" stroke-width="0.900"/><circle cx="11.500" cy="12" r="3" fill="#70a0e0" stroke="#2850b0" stroke-width="0.900"/><path d="M9 2.500h4.500v3.500M12 4.500l1.500 1.800l1.500 -1.800" fill="none" stroke="#d02020" stroke-width="1"/></svg>
<svg class="a" style="left:595px;top:86px;" width="16" height="16" viewBox="0 0 16 16"><path d="M5.500 3.200a6 6 0 1 0 5 0" fill="none" stroke="#707070" stroke-width="1.500"/><path d="M5 0.500l4 2.500l-4 2.500z" fill="#404040"/></svg>
<svg class="a" style="left:595px;top:108px;" width="16" height="16" viewBox="0 0 16 16"><rect x="1" y="1" width="14.500" height="14.500" fill="#9ab4e4" stroke="#3860c0" stroke-width="1"/><rect x="1.500" y="8.500" width="7" height="6.500" fill="#f4e040" stroke="#303030" stroke-width="1"/></svg>
<svg class="a" style="left:655px;top:64px;" width="16" height="16" viewBox="0 0 16 16"><path d="M1 11.500h3v-5c0 -3 1.500 -4.500 4 -4.500s4 1.500 4 4.500v1.500h3.500M1 14.500h14.500M4 11.500h11.500M7 11.500v-5c0 -1 0.300 -1.500 1 -1.500s1 0.500 1 1.500v4h6.500" fill="none" stroke="#2860b0" stroke-width="1.100"/></svg>
<svg class="a" style="left:654.5px;top:86px;" width="16" height="16" viewBox="0 0 16 16"><path d="M6 2.500c-2 0 -3 1 -3 2.500v1.500c-1.500 0 -2 1 -2 2v3.500c0 1.500 1.500 2.500 3.500 2.500h1.500z" fill="#f4dc30" stroke="#303030" stroke-width="1"/><path d="M10.500 2.500c2 0 4 2.500 4.500 5.500c0.500 3 -1.500 6.500 -4.500 6.500z" fill="#70a0e0" stroke="#2850b0" stroke-width="1"/><path d="M8.300 0.500v15.500" stroke="#e01818" stroke-width="1.200"/><path d="M3.500 6v5" stroke="#303030" stroke-width="0.800"/><path d="M12 6v4" stroke="#2850b0" stroke-width="0.800"/></svg>
<svg class="a" style="left:655px;top:108px;" width="17" height="17" viewBox="0 0 17 17"><path d="M3 3h10.500M3 13.500h10.500M3 3v10.500" fill="none" stroke="#202020" stroke-width="1.200" stroke-dasharray="2 1.600"/><rect x="1" y="1" width="4" height="4" fill="#f4e030" stroke="#101010" stroke-width="1"/><rect x="11.500" y="1" width="4" height="4" fill="#60a0e0" stroke="#101010" stroke-width="1"/><rect x="1" y="11.500" width="4" height="4" fill="#60a0e0" stroke="#101010" stroke-width="1"/><rect x="11.500" y="11.500" width="4" height="4" fill="#60a0e0" stroke="#101010" stroke-width="1"/></svg>
<svg class="a" style="left:763px;top:64px;" width="17" height="16" viewBox="0 0 17 16"><defs><linearGradient id="fg" x1="1" y1="0" x2="0" y2="1"><stop offset="0" stop-color="#dde4ec"/><stop offset="1" stop-color="#f8f8f8"/></linearGradient></defs><path d="M1 15.500v-6c0 -5 4 -9 10 -9h5v15z" fill="url(#fg)"/><path d="M11 0.500h5v15h-15v-6" fill="none" stroke="#202020" stroke-width="1.100" stroke-dasharray="14 0"/><path d="M1 10c0 -5.500 4 -9.500 10 -9.500" fill="none" stroke="#2870e0" stroke-width="1.400"/></svg>
<svg class="a" style="left:763px;top:86px;" width="17" height="16" viewBox="0 0 17 16"><path d="M0.500 11.500h9" stroke="#3878d8" stroke-width="1.200" stroke-dasharray="4 1.500"/><path d="M6 7h8M11 4.500l3 2.500l-3 2.500z" fill="#e81818" stroke="#e81818" stroke-width="1.100"/><path d="M15.500 2v13" stroke="#6868e8" stroke-width="1.200"/></svg>
<svg class="a" style="left:763px;top:109px;" width="17" height="16" viewBox="0 0 17 16"><path d="M0.500 8.500h5.500M11.500 8.500h5" stroke="#3878d8" stroke-width="1.200"/><path d="M8.800 4v9.500" stroke="#e81818" stroke-width="1.400"/></svg>
<svg class="a" style="left:825px;top:64px;" width="17" height="16" viewBox="0 0 17 16"><path d="M1 12L15.500 2" stroke="#f08020" stroke-width="1.200"/><path d="M3 2.500l8 9M10.500 1l-3 10" stroke="#182040" stroke-width="1.900" fill="none"/><circle cx="8" cy="13.500" r="1.800" fill="none" stroke="#182040" stroke-width="1.200"/><circle cx="12.500" cy="12" r="1.800" fill="none" stroke="#182040" stroke-width="1.200"/></svg>
<svg class="a" style="left:825px;top:86px;" width="17" height="16" viewBox="0 0 17 16"><path d="M1 6.500l10.500 -4.500v9l-10.500 4.500z" fill="#f6f6f6" stroke="#202020" stroke-width="1.100"/><path d="M12.500 1v9" stroke="#e01818" stroke-width="1"/><path d="M7.500 7.500l8 7.500M15.500 7.500l-8.500 7.500" stroke="#e01818" stroke-width="1.600"/></svg>
<svg class="a" style="left:957.5px;top:60.5px;" width="38" height="36" viewBox="0 3 38 36"><path d="M3 16l21 21" stroke="#a8b0a0" stroke-width="2.500"/><path d="M2.500 15.500l21 21" stroke="#303030" stroke-width="1.200"/><path d="M2.500 15.500l7.500 -7.500M23.500 36.500l7.500 -7.500" stroke="#ee1111" stroke-width="1.300"/><path d="M9 9l20 20" stroke="#ee1111" stroke-width="1.400"/><path d="M8 8l5 1.500l-3.500 3.500zM30 30l-5 -1.500l3.500 -3.500z" fill="#ee1111"/><rect x="14" y="18.500" width="10" height="4.500" fill="#fafafa" stroke="#ee1111" stroke-width="1.200"/></svg>
<svg class="a" style="left:1013px;top:64px;" width="16" height="16" viewBox="0 0 16 16"><path d="M1 13.500h14" stroke="#222222" stroke-width="1.400"/><path d="M6 11h5" stroke="#ee1111" stroke-width="1.300"/></svg>
<svg class="a" style="left:1013px;top:86px;" width="16" height="16" viewBox="0 0 16 16"><path d="M8.800 1.500v13" stroke="#222222" stroke-width="1.400"/><path d="M6.300 5v6" stroke="#ee1111" stroke-width="1.300"/></svg>
<svg class="a" style="left:1013px;top:107px;" width="16" height="16" viewBox="0 0 16 16"><path d="M1.500 1.500v12.500h14" fill="none" stroke="#222222" stroke-width="1.400"/><path d="M1.500 8.500h5v5.500" fill="none" stroke="#ee1111" stroke-width="1.200"/></svg>
<svg class="a" style="left:1112px;top:64px;" width="16" height="16" viewBox="0 0 16 16"><circle cx="6" cy="6.500" r="4.300" fill="none" stroke="#222222" stroke-width="1.200"/><path d="M3 14L13.500 3.500" stroke="#222222" stroke-width="1.200"/><path d="M4 9.500l5 -5M7.500 12l4 -4" stroke="#ee1111" stroke-width="1"/></svg>
<svg class="a" style="left:1112px;top:85px;" width="16" height="16" viewBox="0 0 16 16"><path d="M1 5.500h14M1 12.500h14" stroke="#222222" stroke-width="1.300"/><path d="M3 8l4.500 -5M6 8l4.500 -5M3 15l4.500 -5M6 15l4.500 -5" stroke="#ee1111" stroke-width="1"/></svg>
<svg class="a" style="left:1112px;top:108px;" width="16" height="16" viewBox="0 0 16 16"><circle cx="8" cy="8" r="6.500" fill="none" stroke="#222222" stroke-width="1.300"/><circle cx="8" cy="8" r="3.800" fill="none" stroke="#222222" stroke-width="1.200"/><circle cx="8" cy="8" r="1.500" fill="#ee1111"/></svg>
<svg class="a" style="left:1196px;top:65px;" width="16" height="16" viewBox="0 0 16 16"><path d="M1 4.500h14M1 13h14" stroke="#222222" stroke-width="1.400"/><path d="M3 8.800h10" stroke="#ee1111" stroke-width="1.200"/><path d="M1 8.800l3 -2v4zM15 8.800l-3 -2v4z" fill="#ee1111"/></svg>
<svg class="a" style="left:1196px;top:85px;" width="17" height="16" viewBox="0 0 17 16"><path d="M1 1l5.500 5.500M10 9.500l6 6" stroke="#222222" stroke-width="1.200"/></svg>
<svg class="a" style="left:1196px;top:107px;" width="16" height="16" viewBox="0 0 16 16"><path d="M1.500 14.500L14.500 2" stroke="#222222" stroke-width="1.200"/><circle cx="8.500" cy="7.800" r="2" fill="#ee1111"/></svg>
<svg class="a" style="left:1292px;top:64px;" width="16" height="16" viewBox="0 0 16 16"><path d="M0.500 11h14M5 11l8.500 -8" stroke="#222222" stroke-width="1.100" fill="none"/><path d="M6.300 8.500v5.500M3.500 11h5.500" stroke="#ee1111" stroke-width="1.300"/></svg>
<svg class="a" style="left:1292px;top:86px;" width="16" height="16" viewBox="0 0 16 16"><path d="M8.300 1v14" stroke="#222222" stroke-width="1.300"/><rect x="2" y="6.500" width="3" height="3" fill="#ee1111"/><rect x="11.500" y="6.500" width="3" height="3" fill="#ee1111"/></svg>
<svg class="a" style="left:1292px;top:108px;" width="16" height="16" viewBox="0 0 16 16"><path d="M2 14.500h13" stroke="#222222" stroke-width="1.200"/><path d="M5.500 7h6.500M7 9.500h3.500M8.200 12h1.200" stroke="#ee1111" stroke-width="1.200"/></svg>
<svg class="a" style="left:1376px;top:64px;" width="17" height="16" viewBox="0 0 17 16"><path d="M1 9l7 -6.500l8 4.500l-7.500 6z" fill="#f8f8f8" stroke="#222222" stroke-width="1" stroke-dasharray="3 1"/><path d="M2 1c4 0.500 6 3 6.500 6.500M8.500 12v3.500" fill="none" stroke="#222222" stroke-width="1.100"/><path d="M8.500 5v5M6 7.500h5" stroke="#ee1111" stroke-width="1.200"/></svg>
<svg class="a" style="left:1376px;top:86px;" width="17" height="16" viewBox="0 0 17 16"><path d="M1 1.500h11M1 15h11M3 1.500v13.500M6.500 1.500v13.500" fill="none" stroke="#404040" stroke-width="1.300"/><path d="M6.500 12l7 -8.500l2.500 2l-7 8.500z" fill="#e87020" stroke="#904010" stroke-width="0.700"/><path d="M12.500 4.500l3 -3" stroke="#c0c0c0" stroke-width="2"/><path d="M6.500 12l-0.500 3l2.800 -1z" fill="#f4d8b0"/></svg>
<svg class="a" style="left:1376px;top:108px;" width="17" height="16" viewBox="0 0 17 16"><path d="M0.500 7.500h16" stroke="#ee1111" stroke-width="1.200"/><circle cx="5.500" cy="7.500" r="1.700" fill="#f4f4f4" stroke="#ee1111" stroke-width="1"/><circle cx="11.500" cy="7.500" r="1.700" fill="#f4f4f4" stroke="#ee1111" stroke-width="1"/><path d="M5.500 9.500v3M11.500 9.500v3" stroke="#ee1111" stroke-width="1"/></svg>
<svg class="a" style="left:1512px;top:63px;" width="36" height="34" viewBox="0 0 36 34"><path d="M8 2v12M2 8h12M3.500 3.500l9 9M12.500 3.500l-9 9" stroke="#e0a818" stroke-width="1.300"/><path d="M12 34l20 -20" stroke="#181818" stroke-width="2.400"/><path d="M6 28l17 -17" stroke="#e01020" stroke-width="2.200"/><path d="M19 7.500l8 -0.500l-0.500 8z" fill="#e01020"/><path d="M3.500 25.500l5 5" stroke="#e01020" stroke-width="1.600"/></svg>
<div class="a" style="left:10px;top:160px;width:2px;height:2px;background:#b8b8b8;"></div>
<div class="a" style="left:10px;top:164px;width:2px;height:2px;background:#b8b8b8;"></div>
<div class="a" style="left:10px;top:168px;width:2px;height:2px;background:#b8b8b8;"></div>
<div class="a" style="left:10px;top:172px;width:2px;height:2px;background:#b8b8b8;"></div>
<div class="a" style="left:10px;top:176px;width:2px;height:2px;background:#b8b8b8;"></div>
<svg class="a" style="left:18px;top:160px;" width="18" height="17" viewBox="0 0 18 17"><path d="M1.500 9v-3.500c0 -1.500 1 -2.500 2.500 -2.500h3.500v-2.500l4.500 4l-4.500 4v-2.500h-2v3z" fill="#a0a0a0"/><path d="M10 7.500v8l2 -1.800l1.500 3l1.300 -0.600l-1.500 -2.900h2.700z" fill="#f0f0f0" stroke="#a0a0a0" stroke-width="1"/></svg>
<svg class="a" style="left:43px;top:160px;" width="14" height="17" viewBox="0 0 14 17"><path d="M2.500 1.500v12l3 -2.800l2 4.500l1.800 -0.800l-2 -4.400h4.200z" fill="#fff" stroke="#000" stroke-width="1.200" stroke-linejoin="miter"/></svg>
<svg class="a" style="left:63px;top:160px;" width="17" height="17" viewBox="0 0 17 17"><rect x="1" y="1.500" width="13.500" height="7.500" fill="none" stroke="#b0b0b0" stroke-width="1"/><path d="M8.500 6.500v8l2 -1.800l1.500 3l1.300 -0.600l-1.500 -2.900h2.700z" fill="#f0f0f0" stroke="#b0b0b0" stroke-width="1"/></svg>
<div class="a" style="left:84px;top:158px;width:146px;height:23px;background:#e5e5e5;border:1px solid #d6d6d6;box-sizing:border-box;"></div>
<svg class="a" style="left:219.5px;top:167.5px" width="7" height="5"><path d="M1 1h5l-2.5 3z" fill="#b8b8b8"/></svg>
<div class="a" style="left:234px;top:158px;width:146px;height:23px;background:#e5e5e5;border:1px solid #d6d6d6;box-sizing:border-box;"></div>
<div class="a" style="left:236px;top:160px;width:128px;height:19px;background:#ffffff;"></div>
<svg class="a" style="left:369.5px;top:167.5px" width="7" height="5"><path d="M1 1h5l-2.5 3z" fill="#b8b8b8"/></svg>
<div class="a" style="left:384px;top:158px;width:146px;height:23px;background:#e5e5e5;border:1px solid #d6d6d6;box-sizing:border-box;"></div>
<svg class="a" style="left:519.5px;top:167.5px" width="7" height="5"><path d="M1 1h5l-2.5 3z" fill="#b8b8b8"/></svg>
<svg class="a" style="left:535px;top:161px;" width="16" height="14" viewBox="0 0 16 14"><rect x="5" y="0.500" width="6" height="4.500" fill="#901010" stroke="#400000" stroke-width="0.800"/><rect x="0.500" y="8.500" width="6" height="4.500" fill="#1030e0" stroke="#000060" stroke-width="0.800"/><rect x="9.500" y="8.500" width="6" height="4.500" fill="#109030" stroke="#004010" stroke-width="0.800"/><path d="M8 5v2M3.500 8.500v-1.500h9v1.500" fill="none" stroke="#202020" stroke-width="1"/></svg>
<svg class="a" style="left:1905.0px;top:193.5px" width="11" height="7"><path d="M1 1h9l-4.5 5z" fill="#6e6e6e"/></svg>
<svg class="a" style="left:24px;top:186px;" width="114" height="22" viewBox="0 0 114 22"><path d="M2 21L21.500 1.500h86.500q2.500 0 2.500 2.500v17.500" fill="#fcfcfc" stroke="#a4a4a4" stroke-width="1"/></svg>
<svg class="a" style="left:119px;top:192px;" width="10" height="10" viewBox="0 0 10 10"><path d="M1.500 1.500l7 7M8.500 1.500l-7 7" stroke="#444" stroke-width="1.300"/></svg>
<svg class="a" style="left:280.0px;top:217.0px" width="10" height="6"><path d="M1 1h8l-4.0 4z" fill="#555"/></svg>
<svg class="a" style="left:299px;top:213px;" width="11" height="12" viewBox="0 0 11 12"><path d="M3.500 1.500h4v5h-4zM2 6.500h7M5.500 6.500v4.500" fill="none" stroke="#555" stroke-width="1.100"/><path d="M7 1.500v5" stroke="#555" stroke-width="1.400"/></svg>
<svg class="a" style="left:318px;top:214px;" width="10" height="10" viewBox="0 0 10 10"><path d="M1.500 1.500l7 7M8.500 1.500l-7 7" stroke="#555" stroke-width="1.300"/></svg>
<svg class="a" style="left:38px;top:240px;" width="7" height="9" viewBox="0 0 7 9"><path d="M1 1l4.500 3.500l-4.500 3.500z" fill="#fdfdfd" stroke="#b8b8b8" stroke-width="1"/></svg>
<svg class="a" style="left:37px;top:265px;" width="7" height="7" viewBox="0 0 7 7"><path d="M6 0.500v5.500h-5.500z" fill="#a8a8a8"/></svg>
<div class="a" style="left:32px;top:278px;width:296px;height:24px;background:#ececec;"></div>
<svg class="a" style="left:43px;top:282px;" width="18" height="17" viewBox="0 0 18 17"><rect x="1" y="3.500" width="11.500" height="11.500" fill="#dce8f8" stroke="#2058c0" stroke-width="1.300"/><path d="M4 12.500l1 -3l8.500 -8.500l2 2l-8.500 8.500z" fill="#f0c040" stroke="#404040" stroke-width="0.800"/><path d="M3 7v6h6" fill="none" stroke="#3060c0" stroke-width="0.800"/><path d="M14 10.500v6M11 13.500h6" stroke="#e81010" stroke-width="1.800"/></svg>
<svg class="a" style="left:65px;top:281px;" width="18" height="18" viewBox="0 0 18 18"><path d="M4 0.500v6M1 3.500h6M2 1.500l4 4M6 1.500l-4 4" stroke="#e8a818" stroke-width="1"/><path d="M1.500 7v10.500M16.500 1v16.500" stroke="#404040" stroke-width="1"/><path d="M8 5.500h8M14 3.500l2 2l-2 2" fill="none" stroke="#303060" stroke-width="0.900"/><rect x="4" y="8" width="10" height="9" fill="#f0ecd8" stroke="#404858" stroke-width="1"/><rect x="4" y="8" width="10" height="2.500" fill="#506080"/><path d="M4 13.500h10M7.300 10.500v6.500M10.600 10.500v6.500" stroke="#606870" stroke-width="0.800"/></svg>
<svg class="a" style="left:37px;top:319px;" width="7" height="7" viewBox="0 0 7 7"><path d="M6 0.500v5.500h-5.500z" fill="#a8a8a8"/></svg>
<svg class="a" style="left:32px;top:333px;" width="13" height="13" viewBox="0 0 13 13"><rect x="0.500" y="0.500" width="12" height="12" fill="#fff" stroke="#333" stroke-width="1"/><path d="M2.800 6.500l2.700 3l5 -6.500" fill="none" stroke="#222" stroke-width="1.300"/></svg>
<div class="a" style="left:109px;top:353px;width:219px;height:19px;background:#ffffff;border:1px solid #555;box-sizing:border-box;"></div>
<div class="a" style="left:109px;top:378px;width:219px;height:19px;background:#ffffff;border:1px solid #555;box-sizing:border-box;"></div>
<div class="a" style="left:109px;top:403px;width:219px;height:19px;background:#ffffff;border:1px solid #555;box-sizing:border-box;"></div>
<div class="a" style="left:109px;top:428px;width:219px;height:19px;background:#ffffff;border:1px solid #555;box-sizing:border-box;"></div>
<svg class="a" style="left:32px;top:454px;" width="13" height="13" viewBox="0 0 13 13"><rect x="0.500" y="0.500" width="12" height="12" fill="#fff" stroke="#333" stroke-width="1"/></svg>
<svg class="a" style="left:32px;top:475px;" width="13" height="13" viewBox="0 0 13 13"><rect x="0.500" y="0.500" width="12" height="12" fill="#fff" stroke="#333" stroke-width="1"/></svg>
<svg class="a" style="left:32px;top:496px;" width="13" height="13" viewBox="0 0 13 13"><circle cx="6.500" cy="6.500" r="6" fill="#fff" stroke="#333" stroke-width="1"/></svg>
<svg class="a" style="left:32px;top:517px;" width="13" height="13" viewBox="0 0 13 13"><circle cx="6.500" cy="6.500" r="6" fill="#fff" stroke="#333" stroke-width="1"/></svg>
<svg class="a" style="left:32px;top:538px;" width="13" height="13" viewBox="0 0 13 13"><circle cx="6.500" cy="6.500" r="6" fill="#fff" stroke="#333" stroke-width="1"/></svg>
<svg class="a" style="left:32px;top:559px;" width="13" height="13" viewBox="0 0 13 13"><circle cx="6.500" cy="6.500" r="6" fill="#fff" stroke="#333" stroke-width="1"/><circle cx="6.500" cy="6.500" r="3.200" fill="#222"/></svg>
<div class="a" style="left:33px;top:580px;width:294px;height:19px;background:#c8c8c8;border-bottom:1px solid #b8b8b8;box-sizing:border-box;"></div>
<div class="a" style="left:26px;top:962px;width:308px;height:1px;background:#d0d0d0;"></div>
<div class="a" style="left:150px;top:962px;width:81px;height:22px;background:#fcfcfc;border:1px solid #b4b4b4;border-top:none;box-sizing:border-box;"></div>
<svg class="a" style="left:31px;top:965px;" width="13" height="15" viewBox="0 0 13 15"><path d="M6.500 2l-2 4l-2 6M6.500 2l2 4l2 6M4.500 6l2 6M8.500 6l-2 6" fill="none" stroke="#4890d0" stroke-width="0.900"/><circle cx="6.500" cy="2.500" r="1.300" fill="#fff" stroke="#4890d0" stroke-width="0.900"/><circle cx="2.500" cy="12.500" r="1.300" fill="#fff" stroke="#4890d0" stroke-width="0.900"/><circle cx="6.500" cy="12.500" r="1.300" fill="#fff" stroke="#4890d0" stroke-width="0.900"/><circle cx="10.500" cy="12.500" r="1.300" fill="#fff" stroke="#4890d0" stroke-width="0.900"/><circle cx="4.500" cy="7" r="1" fill="#fff" stroke="#4890d0" stroke-width="0.800"/><circle cx="8.500" cy="7" r="1" fill="#fff" stroke="#4890d0" stroke-width="0.800"/></svg>
<svg class="a" style="left:89px;top:964px;" width="17" height="17" viewBox="0 0 17 17"><circle cx="7" cy="7" r="5" fill="#d8e8f8" stroke="#5080b0" stroke-width="1.600"/><circle cx="7" cy="7" r="2.500" fill="#f4f8fc" stroke="#90b0d0" stroke-width="0.800"/><path d="M10.800 10.800l4.500 4.500" stroke="#d09820" stroke-width="2.600"/></svg>
<svg class="a" style="left:155px;top:965px;" width="14" height="15" viewBox="0 0 14 15"><rect x="0.800" y="0.800" width="12" height="13" fill="#fff" stroke="#303848" stroke-width="1.200"/><rect x="3" y="3" width="6" height="5" fill="#304878"/><path d="M3 10.500h7M3 12.200h1.500" stroke="#303848" stroke-width="0.900"/></svg>
<svg class="a" style="left:8px;top:991px;" width="13" height="14" viewBox="0 0 13 14"><rect x="0.800" y="0.800" width="10.800" height="12.200" fill="#fdfdfd" stroke="#333" stroke-width="1.200"/><path d="M4 4v2M4 8v2M8.300 4v2M8.300 8v2" stroke="#333" stroke-width="1.500"/></svg>
<div class="a" style="left:7px;top:1010px;width:104px;height:5px;background:#d6d6d6;"></div>
<div class="a" style="left:5px;top:373px;width:2px;height:2px;background:#b4b4b4;"></div>
<div class="a" style="left:9px;top:373px;width:2px;height:2px;background:#b4b4b4;"></div>
<div class="a" style="left:13px;top:373px;width:2px;height:2px;background:#b4b4b4;"></div>
<div class="a" style="left:17px;top:373px;width:2px;height:2px;background:#b4b4b4;"></div>
<div class="a" style="left:5px;top:514px;width:2px;height:2px;background:#b4b4b4;"></div>
<div class="a" style="left:9px;top:514px;width:2px;height:2px;background:#b4b4b4;"></div>
<div class="a" style="left:13px;top:514px;width:2px;height:2px;background:#b4b4b4;"></div>
<div class="a" style="left:17px;top:514px;width:2px;height:2px;background:#b4b4b4;"></div>
<div class="a" style="left:5px;top:757px;width:2px;height:2px;background:#b4b4b4;"></div>
<div class="a" style="left:9px;top:757px;width:2px;height:2px;background:#b4b4b4;"></div>
<div class="a" style="left:13px;top:757px;width:2px;height:2px;background:#b4b4b4;"></div>
<div class="a" style="left:17px;top:757px;width:2px;height:2px;background:#b4b4b4;"></div>
<svg class="a" style="left:6px;top:499.5px;" width="5" height="7" viewBox="0 0 5 7"><path d="M4 0.500v5.500l-3.500 -2.750z" fill="#666"/></svg>
<svg class="a" style="left:6px;top:742.5px;" width="5" height="7" viewBox="0 0 5 7"><path d="M4 0.500v5.500l-3.500 -2.750z" fill="#666"/></svg>
<svg class="a" style="left:6px;top:950px;" width="5" height="7" viewBox="0 0 5 7"><path d="M4 0.500v5.500l-3.500 -2.750z" fill="#666"/></svg>
<div class="a" style="left:0px;top:428px;width:24px;height:1px;background:#d4d4d4;"></div>
<div class="a" style="left:0px;top:900px;width:24px;height:1px;background:#d4d4d4;"></div>
<svg class="a" style="left:2px;top:385px;" width="20" height="12" viewBox="0 0 20 12"><rect x="8" y="1.500" width="10" height="9.500" fill="none" stroke="#b8b8b8" stroke-width="1"/><rect x="9.500" y="3" width="7" height="6.500" fill="#b8b8b8"/><path d="M0 9.500h8M4 4.500h4" stroke="#d0d0d0" stroke-width="1"/></svg>
<svg class="a" style="left:4px;top:404px;" width="18" height="17" viewBox="0 0 18 17"><circle cx="7" cy="9.500" r="6" fill="#dcdcdc" stroke="#a4a4a4" stroke-width="1"/><rect x="5.500" y="1" width="10.500" height="9.500" fill="#e4e4e4" stroke="#a4a4a4" stroke-width="1.100"/><path d="M7 4v11M1.500 9.500h11" stroke="#a4a4a4" stroke-width="0.800"/></svg>
<svg class="a" style="left:4px;top:434px;" width="18" height="17" viewBox="0 0 18 17"><circle cx="7" cy="9.500" r="6" fill="#b8b8b8" stroke="#a4a4a4" stroke-width="1"/><rect x="5.500" y="1" width="10.500" height="9.500" fill="#b8b8b8" stroke="#a4a4a4" stroke-width="1.100"/></svg>
<svg class="a" style="left:4px;top:456px;" width="18" height="17" viewBox="0 0 18 17"><circle cx="7" cy="9.500" r="6" fill="#b8b8b8" stroke="#a4a4a4" stroke-width="1"/><rect x="5.500" y="1" width="10.500" height="9.500" fill="#c8c8c8" stroke="#a4a4a4" stroke-width="1.100"/><path d="M5.500 4.500a6 6 0 0 1 7 6" fill="none" stroke="#a4a4a4" stroke-width="1"/></svg>
<svg class="a" style="left:4px;top:478px;" width="18" height="17" viewBox="0 0 18 17"><circle cx="7" cy="9.500" r="6" fill="#b8b8b8" stroke="#a4a4a4" stroke-width="1"/><rect x="5.500" y="1" width="10.500" height="9.500" fill="#f4f4f4" stroke="#a4a4a4" stroke-width="1.100"/><path d="M5.500 4.500a6 6 0 0 1 7 6" fill="none" stroke="#a4a4a4" stroke-width="1"/></svg>
<svg class="a" style="left:5px;top:524px;" width="18" height="17" viewBox="0 0 18 17"><path d="M1 5.500h10.500v10.500h-10.500z" fill="#3566ae" fill-opacity="1" stroke="#2a5aa0" stroke-width="1"/><path d="M1 5.500l5 -4.500h10.500l-5 4.500z" fill="#b9cfec" fill-opacity="0.6" stroke="#2a5aa0" stroke-width="1"/><path d="M11.500 5.500l5 -4.500v10.500l-5 4.500z" fill="#b9cfec" fill-opacity="0.6" stroke="#2a5aa0" stroke-width="1"/></svg>
<svg class="a" style="left:5px;top:546px;" width="18" height="17" viewBox="0 0 18 17"><path d="M1 5.500h10.500v10.500h-10.500z" fill="#dbe7f6" fill-opacity="0.75" stroke="#2a5aa0" stroke-width="1"/><path d="M1 5.500l5 -4.500h10.500l-5 4.500z" fill="#3566ae" fill-opacity="1" stroke="#2a5aa0" stroke-width="1"/><path d="M11.500 5.500l5 -4.500v10.500l-5 4.500z" fill="#b9cfec" fill-opacity="0.6" stroke="#2a5aa0" stroke-width="1"/></svg>
<svg class="a" style="left:5px;top:568px;" width="18" height="17" viewBox="0 0 18 17"><path d="M1 5.500l5 -4.500v10.500l-5 4.500z" fill="#3566ae"/><path d="M1 5.500h10.500v10.500h-10.500z" fill="#dbe7f6" fill-opacity="0.3" stroke="#2a5aa0" stroke-width="1"/><path d="M1 5.500l5 -4.500h10.500l-5 4.500z" fill="#b9cfec" fill-opacity="0.25" stroke="#2a5aa0" stroke-width="1"/><path d="M11.500 5.500l5 -4.500v10.500l-5 4.500z" fill="#b9cfec" fill-opacity="0.25" stroke="#2a5aa0" stroke-width="1"/><path d="M6 1v10.500h10.500M6 11.500l-5 4.500" fill="none" stroke="#2a5aa0" stroke-width="0.700"/></svg>
<svg class="a" style="left:5px;top:590px;" width="18" height="17" viewBox="0 0 18 17"><path d="M1 5.500h10.500v10.500h-10.500z" fill="#dbe7f6" fill-opacity="0.75" stroke="#2a5aa0" stroke-width="1"/><path d="M1 5.500l5 -4.500h10.500l-5 4.500z" fill="#b9cfec" fill-opacity="0.6" stroke="#2a5aa0" stroke-width="1"/><path d="M11.500 5.500l5 -4.500v10.500l-5 4.500z" fill="#3566ae" fill-opacity="1" stroke="#2a5aa0" stroke-width="1"/></svg>
<svg class="a" style="left:5px;top:612px;" width="18" height="17" viewBox="0 0 18 17"><path d="M6 1h10.500v10.500h-10.500z" fill="#3566ae"/><path d="M1 5.500h10.500v10.500h-10.500z" fill="#dbe7f6" fill-opacity="0.3" stroke="#2a5aa0" stroke-width="1"/><path d="M1 5.500l5 -4.500h10.500l-5 4.500z" fill="#b9cfec" fill-opacity="0.25" stroke="#2a5aa0" stroke-width="1"/><path d="M11.500 5.500l5 -4.500v10.500l-5 4.500z" fill="#b9cfec" fill-opacity="0.25" stroke="#2a5aa0" stroke-width="1"/><path d="M6 1v10.500h10.500M6 11.500l-5 4.500" fill="none" stroke="#2a5aa0" stroke-width="0.700"/></svg>
<svg class="a" style="left:5px;top:634px;" width="18" height="17" viewBox="0 0 18 17"><path d="M1 16l5 -4.500h10.500l-5 4.500z" fill="#3566ae"/><path d="M1 5.500h10.500v10.500h-10.500z" fill="#dbe7f6" fill-opacity="0.3" stroke="#2a5aa0" stroke-width="1"/><path d="M1 5.500l5 -4.500h10.500l-5 4.500z" fill="#b9cfec" fill-opacity="0.25" stroke="#2a5aa0" stroke-width="1"/><path d="M11.500 5.500l5 -4.500v10.500l-5 4.500z" fill="#b9cfec" fill-opacity="0.25" stroke="#2a5aa0" stroke-width="1"/><path d="M6 1v10.500h10.500M6 11.500l-5 4.500" fill="none" stroke="#2a5aa0" stroke-width="0.700"/></svg>
<svg class="a" style="left:7px;top:658px;" width="14" height="16" viewBox="0 0 14 16"><path d="M4.500 5.500h8.500v9.500h-8.500z" fill="#4a7cc0" stroke="#244f90" stroke-width="1"/><path d="M4.500 5.500l-4 -4.500h8.500l4 4.500z" fill="#3566ae" stroke="#244f90" stroke-width="1"/><path d="M0.500 1l4 4.500v9.500l-4 -4.500z" fill="#2f5ea6" stroke="#244f90" stroke-width="1"/></svg>
<svg class="a" style="left:7px;top:680px;" width="14" height="16" viewBox="0 0 14 16"><path d="M4.500 5.500h8.500v9.500h-8.500z" fill="#4a7cc0" stroke="#244f90" stroke-width="1"/><path d="M4.500 5.500l-4 -4.500h8.500l4 4.500z" fill="#3566ae" stroke="#244f90" stroke-width="1"/><path d="M0.500 1l4 4.500v9.500l-4 -4.500z" fill="#fff" stroke="#244f90" stroke-width="1"/></svg>
<svg class="a" style="left:7px;top:702px;" width="14" height="16" viewBox="0 0 14 16"><path d="M4.500 5.500h8.500v9.500h-8.500z" fill="#4a7cc0" stroke="#244f90" stroke-width="1"/><path d="M4.500 5.500l-4 -4.500h8.500l4 4.500z" fill="#fff" stroke="#244f90" stroke-width="1"/><path d="M0.500 1l4 4.500v9.500l-4 -4.500z" fill="#2f5ea6" stroke="#244f90" stroke-width="1"/></svg>
<svg class="a" style="left:7px;top:724px;" width="14" height="16" viewBox="0 0 14 16"><path d="M4.500 5.500h8.500v9.500h-8.500z" fill="#4a7cc0" stroke="#244f90" stroke-width="1"/><path d="M4.500 5.500l-4 -4.500h8.500l4 4.500z" fill="#3566ae" stroke="#244f90" stroke-width="1"/><path d="M0.500 1l4 4.500v9.500l-4 -4.500z" fill="#fff" stroke="#244f90" stroke-width="1"/></svg>
<svg class="a" style="left:4px;top:767px;" width="18" height="17" viewBox="0 0 18 17"><path d="M3 3l12 11M1 6l4.500 -5M12.500 16l4.500 -5" fill="none" stroke="#a8a8a8" stroke-width="1.100"/></svg>
<svg class="a" style="left:4px;top:789px;" width="18" height="15" viewBox="0 0 18 15"><path d="M1.500 1h15M1.500 4h15M2.500 1v12M15.500 1v12" fill="none" stroke="#a8a8a8" stroke-width="1"/><rect x="4.500" y="6.500" width="9" height="6" rx="3" fill="#e8e8e8" stroke="#a8a8a8" stroke-width="1.100"/><rect x="6.500" y="8.500" width="5" height="2" fill="#a8a8a8"/></svg>
<svg class="a" style="left:4px;top:810px;" width="19" height="16" viewBox="0 0 19 16"><path d="M1.500 0.500v15M4.500 0.500v15M1.500 1.500h8M1.500 14.500h8" fill="none" stroke="#a8a8a8" stroke-width="1"/><rect x="7.500" y="5" width="10" height="6" rx="3" fill="#e8e8e8" stroke="#a8a8a8" stroke-width="1.100"/><rect x="9.500" y="7" width="6" height="2" fill="#a8a8a8"/></svg>
<svg class="a" style="left:4px;top:832px;" width="18" height="17" viewBox="0 0 18 17"><path d="M1 15.500h16M1.500 15.500L11 2" fill="none" stroke="#a8a8a8" stroke-width="1.200"/><path d="M9 5c3 2 4.500 5.500 4.500 10" fill="none" stroke="#a8a8a8" stroke-width="1"/></svg>
<svg class="a" style="left:5px;top:855px;" width="17" height="17" viewBox="0 0 17 17"><circle cx="8.500" cy="8.500" r="7.300" fill="#ececec" stroke="#a8a8a8" stroke-width="1.100"/><path d="M8.500 8.500l-4.500 -4.500M4 7v-3h3" fill="none" stroke="#a8a8a8" stroke-width="1"/></svg>
<svg class="a" style="left:4px;top:876px;" width="18" height="18" viewBox="0 0 18 18"><circle cx="9" cy="9" r="7.800" fill="#ececec" stroke="#a8a8a8" stroke-width="1.100"/><path d="M3.500 3.500l11 11M3.500 6.500v-3h3M14.500 11.500v3h-3" fill="none" stroke="#a8a8a8" stroke-width="1"/></svg>
<svg class="a" style="left:4px;top:907px;" width="18" height="16" viewBox="0 0 18 16"><path d="M1.500 14.500v-4.500c0 -2 1 -3 3 -3h4" fill="none" stroke="#a8a8a8" stroke-width="1.300"/><path d="M0 12l1.500 3l1.500 -3z" fill="#a8a8a8"/><text x="13" y="7.500" font-family="Liberation Sans" font-weight="bold" font-size="8.500" text-anchor="middle" fill="#a8a8a8">A</text></svg>
<svg class="a" style="left:8px;top:929px;" width="10" height="17" viewBox="0 0 10 17"><path d="M0.500 1h9M0.500 3.500h9M0.500 6h9" stroke="#a8a8a8" stroke-width="1"/><rect x="1" y="8" width="8" height="8.500" fill="#a8a8a8"/></svg>
<svg class="a" style="left:1386px;top:1021px;" width="17" height="17" viewBox="0 0 17 17"><circle cx="6.500" cy="6.500" r="5.300" fill="#f4f4f4" stroke="#505050" stroke-width="1.300"/><path d="M4 3.500h3.500l1.500 1.500v4.500h-5z" fill="#fff" stroke="#606060" stroke-width="0.800"/><path d="M10.500 10.500l4.500 4.500" stroke="#404040" stroke-width="2.400" stroke-linecap="round"/></svg>
<svg class="a" style="left:1409px;top:1021px;" width="17" height="17" viewBox="0 0 17 17"><circle cx="6.500" cy="6.500" r="5.300" fill="#f4f4f4" stroke="#505050" stroke-width="1.300"/><rect x="3.800" y="4" width="5.500" height="5" fill="#fff" stroke="#606060" stroke-width="0.900"/><path d="M10.500 10.500l4.500 4.500" stroke="#404040" stroke-width="2.400" stroke-linecap="round"/></svg>
<svg class="a" style="left:1432.0px;top:1026.0px" width="7" height="5"><path d="M1 1h5l-2.5 3z" fill="#444"/></svg>
<svg class="a" style="left:1444px;top:1021px;" width="17" height="16" viewBox="0 0 17 16"><path d="M1 5l3.500 -3.500h8l-3.500 3.500zM1 5h8v8.500h-8z" fill="#f4e460" stroke="#101010" stroke-width="1.100"/><path d="M9 5l3.500 -3.500v8.500l-3.500 3.500z" fill="#2858b0" stroke="#101010" stroke-width="1.100"/><path d="M14 3.500v6M11.500 6.500h5M12.200 4.500l3.600 4M15.800 4.500l-3.600 4" stroke="#e01010" stroke-width="1"/></svg>
<svg class="a" style="left:1466.5px;top:1026.0px" width="7" height="5"><path d="M1 1h5l-2.5 3z" fill="#444"/></svg>
<svg class="a" style="left:1479px;top:1020px;" width="17" height="18" viewBox="0 0 17 18"><path d="M1 6.500l4.500 -5h11l-5 5z" fill="#d0e0f4" stroke="#3060a8" stroke-width="0.900"/><path d="M1 6.500h10.500v10.500h-10.500z" fill="#3568b0" stroke="#244f90" stroke-width="0.900"/><path d="M11.500 6.500l5 -5v10.500l-5 5z" fill="#a8c4e8" stroke="#3060a8" stroke-width="0.900"/></svg>
<svg class="a" style="left:1502.0px;top:1026.0px" width="7" height="5"><path d="M1 1h5l-2.5 3z" fill="#444"/></svg>
<svg class="a" style="left:1513px;top:1020px;" width="18" height="18" viewBox="0 0 18 18"><path d="M7 0.500l-2.500 2.500h5zM0.500 7l2.500 -2.500v5z" fill="#404040"/><circle cx="8" cy="7.500" r="3.500" fill="#d0e4f8" stroke="#2868c0" stroke-width="1.200"/><path d="M5 7.500a3 3 0 0 1 6 0" fill="none" stroke="#3878d0" stroke-width="1"/><path d="M6 8.500h10M6 8.500v3" fill="none" stroke="#404040" stroke-width="1" stroke-dasharray="1.500 1"/><rect x="10" y="10" width="6.500" height="7" fill="#f0f0f0" stroke="#404040" stroke-width="1.100"/><rect x="11.500" y="14" width="3.500" height="3" fill="#606060"/></svg>
<svg class="a" style="left:1536.5px;top:1026.0px" width="7" height="5"><path d="M1 1h5l-2.5 3z" fill="#444"/></svg>
<svg class="a" style="left:1549px;top:1020px;" width="17" height="18" viewBox="0 0 17 18"><path d="M1 9.500l12 -7l3 -1v9l-3.500 6.500h-11.500z" fill="#4a80c8" stroke="#244f90" stroke-width="0.900"/><path d="M1 9.500l12 -7l3 -1l-3.500 5.500z" fill="#c0d8f4" stroke="#3060a8" stroke-width="0.800"/><path d="M12.500 7v10" stroke="#244f90" stroke-width="0.800"/></svg>
<svg class="a" style="left:1572px;top:1020px;" width="18" height="17" viewBox="0 0 18 17"><circle cx="4.800" cy="11.800" r="3" fill="#dce8f6" stroke="#4070b0" stroke-width="1.500"/><circle cx="12.300" cy="12.300" r="3" fill="#dce8f6" stroke="#4070b0" stroke-width="1.500"/><path d="M2 10.500c0.200 -4.500 2.200 -8 5.800 -9M9.500 10.500c1 -3.500 3.500 -6.300 7.500 -7.300M7.800 11.500l1.500 0.200" fill="none" stroke="#4070b0" stroke-width="1.400"/></svg>
<svg class="a" style="left:1591.0px;top:1026.0px" width="7" height="5"><path d="M1 1h5l-2.5 3z" fill="#444"/></svg>
<svg class="a" style="left:1604px;top:1020px;" width="18" height="18" viewBox="0 0 18 18"><path d="M1.500 5.500l3.500 -4h11.500l-3.500 4z" fill="#404850" stroke="#202020" stroke-width="1.200"/><path d="M1.500 5.500h11.500v11h-11.500z" fill="#8ab0e4" stroke="#202020" stroke-width="1.400"/><path d="M13 5.500l3.500 -4v11l-3.500 4z" fill="#505860" stroke="#202020" stroke-width="1.200"/></svg>
<svg class="a" style="left:1624.0px;top:1026.0px" width="7" height="5"><path d="M1 1h5l-2.5 3z" fill="#444"/></svg>
<svg class="a" style="left:1638px;top:1021px;" width="17" height="16" viewBox="0 0 17 16"><path d="M5 1h7l3 2.500v9l-3 3h-11v-5.500l2 -2h2z" fill="#2868d0" stroke="#103890" stroke-width="0.900"/><path d="M5 1h7l-1.500 2.500h-7zM1 10l2 -2h4l-1.500 2z" fill="#80b8f4"/><path d="M3.500 3.500h7v4M1 10h9.500v5.500M10.500 7.500h3" fill="none" stroke="#103890" stroke-width="0.800"/></svg>
<svg class="a" style="left:1655.5px;top:1026.0px" width="7" height="5"><path d="M1 1h5l-2.5 3z" fill="#444"/></svg>
<svg class="a" style="left:1670px;top:1020px;" width="18" height="18" viewBox="0 0 18 18"><path d="M1.500 9v-3.500c0 -1.500 1 -2.500 2.500 -2.500h3.500v-2.500l4.500 4l-4.500 4v-2.500h-2v3z" fill="#b4b4b4"/><path d="M10 7.500v8l2 -1.800l1.500 3l1.300 -0.600l-1.500 -2.900h2.700z" fill="#f0f0f0" stroke="#a8a8a8" stroke-width="1"/></svg>
<svg class="a" style="left:1697px;top:1021px;" width="14" height="17" viewBox="0 0 14 17"><path d="M2.500 1.500v12l3 -2.800l2 4.500l1.800 -0.800l-2 -4.400h4.200z" fill="#fff" stroke="#000" stroke-width="1.200"/></svg>
<div class="a" style="left:1720px;top:1023px;width:16px;height:14px;background:#f8f8f8;"></div>
<svg class="a" style="left:1725px;top:1025px;" width="10" height="12" viewBox="0 0 10 12"><path d="M1.500 1v8.500l2 -1.800l1.400 3l1.200 -0.600l-1.400 -2.900h2.800z" fill="#fff" stroke="#909090" stroke-width="0.900"/></svg>
<div class="a" style="left:1740px;top:1019px;width:89px;height:20px;background:#e6e6e6;border:1px solid #bdbdbd;box-sizing:border-box;"></div>
<svg class="a" style="left:1817.5px;top:1026.5px" width="7" height="5"><path d="M1 1h5l-2.5 3z" fill="#bcbcbc"/></svg>
<div class="a" style="left:1830px;top:1019px;width:65px;height:20px;background:#e6e6e6;border:1px solid #bdbdbd;box-sizing:border-box;"></div>
<svg class="a" style="left:1883.5px;top:1026.5px" width="7" height="5"><path d="M1 1h5l-2.5 3z" fill="#bcbcbc"/></svg>
<svg class="a" style="left:1898px;top:1022px;" width="17" height="14" viewBox="0 0 17 14"><rect x="5.500" y="0.500" width="6" height="4" fill="#e01020" stroke="#202080" stroke-width="0.900"/><rect x="0.500" y="9" width="6" height="4" fill="#a8d0f0" stroke="#1030c0" stroke-width="0.900"/><rect x="10" y="9" width="6" height="4" fill="#f4e040" stroke="#1030c0" stroke-width="0.900"/><path d="M8.500 4.500v2.500M3.500 9v-2h10v2" fill="none" stroke="#1030c0" stroke-width="1"/></svg>
<div class="a" style="left:0px;top:1040px;width:1920px;height:1px;background:#2a2a2a;"></div>
<div class="a" style="left:48px;top:1040px;width:344px;height:1px;background:#9c9c9c;"></div>
<div class="a" style="left:688px;top:1040px;width:47px;height:1px;background:#9c9c9c;"></div>
<span class="t" style="left:1058px;top:4.0px;font-size:12px;color:#ffffff;line-height:20px;letter-spacing:-0.381px;">IRONCAD 2019 (NFR) - [Scene1*]</span>
<span class="t" style="left:15px;top:32.5px;font-size:13px;color:#ffffff;line-height:20px;letter-spacing:-0.844px;">Menu</span>
<span class="t" style="left:77px;top:32.5px;font-size:13px;color:#ffffff;line-height:20px;letter-spacing:-0.562px;">Home</span>
<span class="t" style="left:138px;top:32.5px;font-size:13px;color:#ffffff;line-height:20px;letter-spacing:-0.969px;">Feature</span>
<span class="t" style="left:205px;top:32.5px;font-size:13px;color:#2678d8;line-height:20px;letter-spacing:-0.950px;">Sketch</span>
<span class="t" style="left:268px;top:32.5px;font-size:13px;color:#ffffff;line-height:20px;letter-spacing:-0.969px;">Surface</span>
<span class="t" style="left:336px;top:32.5px;font-size:13px;color:#ffffff;line-height:20px;letter-spacing:-0.766px;">Assembly</span>
<span class="t" style="left:417px;top:32.5px;font-size:13px;color:#ffffff;line-height:20px;letter-spacing:-0.738px;">Sheet Metal</span>
<span class="t" style="left:508px;top:32.5px;font-size:13px;color:#ffffff;line-height:20px;letter-spacing:-0.840px;">Tools</span>
<span class="t" style="left:564px;top:32.5px;font-size:13px;color:#ffffff;line-height:20px;letter-spacing:-0.604px;">Smart Markup</span>
<span class="t" style="left:669px;top:32.5px;font-size:13px;color:#ffffff;line-height:20px;letter-spacing:-0.564px;">Visualization</span>
<span class="t" style="left:765px;top:32.5px;font-size:13px;color:#ffffff;line-height:20px;letter-spacing:-0.241px;">Annotation</span>
<span class="t" style="left:855px;top:32.5px;font-size:13px;color:#ffffff;line-height:20px;letter-spacing:-0.350px;">Common</span>
<span class="t" style="left:936px;top:32.5px;font-size:13px;color:#ffffff;line-height:20px;letter-spacing:-0.469px;">Add-Ins</span>
<span class="t" style="left:1780px;top:32.5px;font-size:12.5px;color:#ffffff;line-height:20px;letter-spacing:-0.809px;">Styles</span>
<span class="t" style="left:11px;top:132.0px;font-size:12px;color:#666666;line-height:20px;letter-spacing:-0.338px;">Sketch</span>
<span class="t" style="left:298px;top:132.0px;font-size:12px;color:#666666;line-height:20px;">Drawing</span>
<span class="t" style="left:740px;top:132.0px;font-size:12px;color:#666666;line-height:20px;letter-spacing:0.531px;">Modify</span>
<span class="t" style="left:1188px;top:132.0px;font-size:12px;color:#666666;line-height:20px;letter-spacing:-0.070px;">Constraints</span>
<span class="t" style="left:1509px;top:132.0px;font-size:12px;color:#666666;line-height:20px;letter-spacing:-0.227px;">Display</span>
<span class="t" style="left:13px;top:97.0px;font-size:12px;color:#444444;line-height:20px;letter-spacing:-0.203px;">Finish</span>
<span class="t" style="left:83px;top:62.0px;font-size:12px;color:#444444;line-height:20px;letter-spacing:-0.007px;"><u>P</u>olyline</span>
<span class="t" style="left:83px;top:84.0px;font-size:12px;color:#444444;line-height:20px;letter-spacing:-0.088px;">T<u>w</u>o Point</span>
<span class="t" style="left:83px;top:106.0px;font-size:12px;color:#444444;line-height:20px;letter-spacing:-0.191px;"><u>C</u>enterLine</span>
<span class="t" style="left:175px;top:62.0px;font-size:12px;color:#444444;line-height:20px;letter-spacing:-0.256px;">Rectangle</span>
<span class="t" style="left:175px;top:84.0px;font-size:12px;color:#444444;line-height:20px;letter-spacing:-0.148px;">O<u>n</u>e Tangent and Two Points</span>
<span class="t" style="left:175px;top:106.0px;font-size:12px;color:#444444;line-height:20px;letter-spacing:-0.298px;">By <u>T</u>hree Points</span>
<span class="t" style="left:362px;top:62.0px;font-size:12px;color:#444444;line-height:20px;letter-spacing:-0.396px;"><u>E</u>llipse</span>
<span class="t" style="left:362px;top:84.0px;font-size:12px;color:#444444;line-height:20px;letter-spacing:-0.398px;">B<u>S</u>pline</span>
<span class="t" style="left:363px;top:106.0px;font-size:12px;color:#444444;line-height:20px;letter-spacing:-0.672px;">Text</span>
<span class="t" style="left:436px;top:62.0px;font-size:12px;color:#a8a8a8;line-height:20px;letter-spacing:-0.169px;">Formula</span>
<span class="t" style="left:436px;top:84.0px;font-size:12px;color:#444444;line-height:20px;letter-spacing:0.160px;">Point</span>
<span class="t" style="left:436px;top:106.0px;font-size:12px;color:#444444;line-height:20px;letter-spacing:-0.060px;">Project</span>
<span class="t" style="left:508px;top:62.0px;font-size:12px;color:#444444;line-height:20px;letter-spacing:0.148px;">Construction</span>
<span class="t" style="left:614px;top:62.0px;font-size:12px;color:#444444;line-height:20px;letter-spacing:0.219px;">Move</span>
<span class="t" style="left:614px;top:84.0px;font-size:12px;color:#444444;line-height:20px;letter-spacing:-0.272px;">Rotate</span>
<span class="t" style="left:614px;top:106.0px;font-size:12px;color:#444444;line-height:20px;letter-spacing:-0.758px;">Scale</span>
<span class="t" style="left:674px;top:62.0px;font-size:12px;color:#444444;line-height:20px;letter-spacing:0.041px;">Offset</span>
<span class="t" style="left:674px;top:84.0px;font-size:12px;color:#444444;line-height:20px;letter-spacing:0.334px;">Mirror</span>
<span class="t" style="left:674px;top:106.0px;font-size:12px;color:#444444;line-height:20px;letter-spacing:-0.184px;">Linear Pattern</span>
<span class="t" style="left:782px;top:62.0px;font-size:12px;color:#444444;line-height:20px;letter-spacing:-0.072px;"><u>F</u>illet</span>
<span class="t" style="left:782px;top:84.0px;font-size:12px;color:#444444;line-height:20px;letter-spacing:-0.275px;"><u>E</u>xtend</span>
<span class="t" style="left:782px;top:106.0px;font-size:12px;color:#444444;line-height:20px;letter-spacing:-0.090px;">Spl<u>i</u>t</span>
<span class="t" style="left:845px;top:62.0px;font-size:12px;color:#444444;line-height:20px;letter-spacing:-0.521px;">T<u>r</u>im</span>
<span class="t" style="left:844px;top:84.0px;font-size:12px;color:#444444;line-height:20px;letter-spacing:-0.146px;">Clear Duplicate</span>
<span class="t" style="left:1032px;top:62.0px;font-size:12px;color:#444444;line-height:20px;letter-spacing:0.108px;">Horizontal</span>
<span class="t" style="left:1032px;top:84.0px;font-size:12px;color:#444444;line-height:20px;letter-spacing:-0.194px;">Vertical</span>
<span class="t" style="left:1032px;top:106.0px;font-size:12px;color:#444444;line-height:20px;letter-spacing:-0.087px;">Perpendicular</span>
<span class="t" style="left:1131px;top:62.0px;font-size:12px;color:#444444;line-height:20px;letter-spacing:-0.117px;">Tangent</span>
<span class="t" style="left:1131px;top:84.0px;font-size:12px;color:#444444;line-height:20px;letter-spacing:-0.290px;">Parallel</span>
<span class="t" style="left:1131px;top:106.0px;font-size:12px;color:#444444;line-height:20px;letter-spacing:-0.040px;">Concentric</span>
<span class="t" style="left:1215px;top:62.0px;font-size:12px;color:#444444;line-height:20px;letter-spacing:-0.158px;">Equal Length</span>
<span class="t" style="left:1215px;top:84.0px;font-size:12px;color:#444444;line-height:20px;letter-spacing:-0.100px;">Colinear</span>
<span class="t" style="left:1215px;top:106.0px;font-size:12px;color:#444444;line-height:20px;letter-spacing:0.520px;">Midpoint</span>
<span class="t" style="left:1310px;top:62.0px;font-size:12px;color:#444444;line-height:20px;letter-spacing:0.144px;">Coincident</span>
<span class="t" style="left:1310px;top:84.0px;font-size:12px;color:#444444;line-height:20px;letter-spacing:0.334px;">Mirror</span>
<span class="t" style="left:1310px;top:106.0px;font-size:12px;color:#444444;line-height:20px;letter-spacing:-0.336px;">Fixed</span>
<span class="t" style="left:1394px;top:62.0px;font-size:12px;color:#444444;line-height:20px;">Penetrating Point</span>
<span class="t" style="left:1394px;top:84.0px;font-size:12px;color:#444444;line-height:20px;letter-spacing:-0.054px;">Edit Dimension</span>
<span class="t" style="left:1394px;top:106.0px;font-size:12px;color:#444444;line-height:20px;letter-spacing:0.018px;">Points Horizontal</span>
<span class="t" style="left:959px;top:97.0px;font-size:12px;color:#444444;line-height:20px;letter-spacing:-0.254px;">Smart</span>
<span class="t" style="left:941px;top:112.0px;font-size:12px;color:#444444;line-height:20px;letter-spacing:0.037px;">Dimension</span>
<span class="t" style="left:1511px;top:97.0px;font-size:12px;color:#444444;line-height:20px;letter-spacing:-0.227px;">Display</span>
<span class="t" style="left:88px;top:160.0px;font-size:12px;color:#222;line-height:20px;letter-spacing:-0.005px;">Default</span>
<span class="t" style="left:238px;top:160.0px;font-size:12px;color:#8c8c8c;line-height:20px;letter-spacing:0.156px;">Any</span>
<span class="t" style="left:388px;top:160.0px;font-size:12px;color:#222;line-height:20px;letter-spacing:-0.005px;">Default</span>
<span class="t" style="left:61px;top:186.5px;font-size:12.5px;color:#444;line-height:20px;font-weight:bold;letter-spacing:-0.443px;">Scene1*</span>
<span class="t" style="left:30px;top:209.0px;font-size:12px;color:#484848;line-height:20px;letter-spacing:-0.189px;">Properties</span>
<span class="t" style="left:54px;top:235.0px;font-size:12.5px;color:#444;line-height:20px;font-weight:bold;letter-spacing:-0.802px;">Message</span>
<span class="t" style="left:54px;top:259.0px;font-size:12.5px;color:#444;line-height:20px;font-weight:bold;letter-spacing:-0.807px;">Actions</span>
<span class="t" style="left:54px;top:313.0px;font-size:12.5px;color:#444;line-height:20px;font-weight:bold;letter-spacing:-0.344px;">Property</span>
<span class="t" style="left:50px;top:330.0px;font-size:12px;color:#222;line-height:20px;letter-spacing:-0.305px;">Display Grid</span>
<span class="t" style="left:32px;top:353.0px;font-size:12px;color:#222;line-height:20px;letter-spacing:0.167px;">Major X(mm)</span>
<span class="t" style="left:114px;top:353.0px;font-size:11.5px;color:#222;line-height:20px;">10</span>
<span class="t" style="left:32px;top:378.0px;font-size:12px;color:#222;line-height:20px;letter-spacing:0.188px;">Major Y(mm)</span>
<span class="t" style="left:114px;top:378.0px;font-size:11.5px;color:#222;line-height:20px;">10</span>
<span class="t" style="left:32px;top:403.0px;font-size:12px;color:#222;line-height:20px;letter-spacing:0.267px;">Minor X(mm)</span>
<span class="t" style="left:114px;top:403.0px;font-size:11.5px;color:#222;line-height:20px;">2.500</span>
<span class="t" style="left:32px;top:428.0px;font-size:12px;color:#222;line-height:20px;letter-spacing:0.287px;">Minor Y(mm)</span>
<span class="t" style="left:114px;top:428.0px;font-size:11.5px;color:#222;line-height:20px;">2.500</span>
<span class="t" style="left:50px;top:451.0px;font-size:12px;color:#222;line-height:20px;letter-spacing:-0.216px;">Snap to Grid</span>
<span class="t" style="left:50px;top:472.0px;font-size:12px;color:#222;line-height:20px;letter-spacing:-0.039px;">Snap to Construction Geometry</span>
<span class="t" style="left:50px;top:493.0px;font-size:12px;color:#222;line-height:20px;letter-spacing:-0.091px;">Hide Edited Intellishape</span>
<span class="t" style="left:50px;top:514.0px;font-size:12px;color:#222;line-height:20px;letter-spacing:-0.159px;">Hide Edited Part</span>
<span class="t" style="left:50px;top:535.0px;font-size:12px;color:#222;line-height:20px;letter-spacing:0.188px;">Hide All</span>
<span class="t" style="left:50px;top:556.0px;font-size:12px;color:#222;line-height:20px;letter-spacing:-0.036px;">Display All</span>
<span class="t" style="left:143px;top:579.5px;font-size:12px;color:#8a8a8a;line-height:20px;letter-spacing:-0.095px;">UnderDefined</span>
<span class="t" style="left:48px;top:963.0px;font-size:12px;color:#444;line-height:20px;letter-spacing:-0.758px;">Scene</span>
<span class="t" style="left:108px;top:963.0px;font-size:12px;color:#444;line-height:20px;letter-spacing:-0.606px;">Search</span>
<span class="t" style="left:172px;top:962.0px;font-size:12px;color:#444;line-height:20px;letter-spacing:-0.189px;">Properties</span>
<span class="t" style="left:25px;top:988.0px;font-size:12px;color:#444;line-height:20px;letter-spacing:-0.194px;">Catalog Browser</span>
<span class="t" style="left:2px;top:1018.0px;font-size:12px;color:#333;line-height:20px;">Specify the curve to trim.</span>
<span class="t" style="left:1138px;top:1018.0px;font-size:11.5px;color:#444;line-height:20px;letter-spacing:-0.247px;">X: -59.359 Y: 5.460 Z: 0.000</span>
<span class="t" style="left:1293px;top:1018.0px;font-size:11.5px;color:#444;line-height:20px;letter-spacing:0.206px;">Units: mm, deg</span>
<span class="t" style="left:1743px;top:1019.5px;font-size:13px;color:#b4b4b4;line-height:20px;letter-spacing:-1.203px;">Any</span>
<span class="t" style="left:1833px;top:1019.5px;font-size:13px;color:#b4b4b4;line-height:20px;letter-spacing:-0.701px;">Default</span>
</body></html>
